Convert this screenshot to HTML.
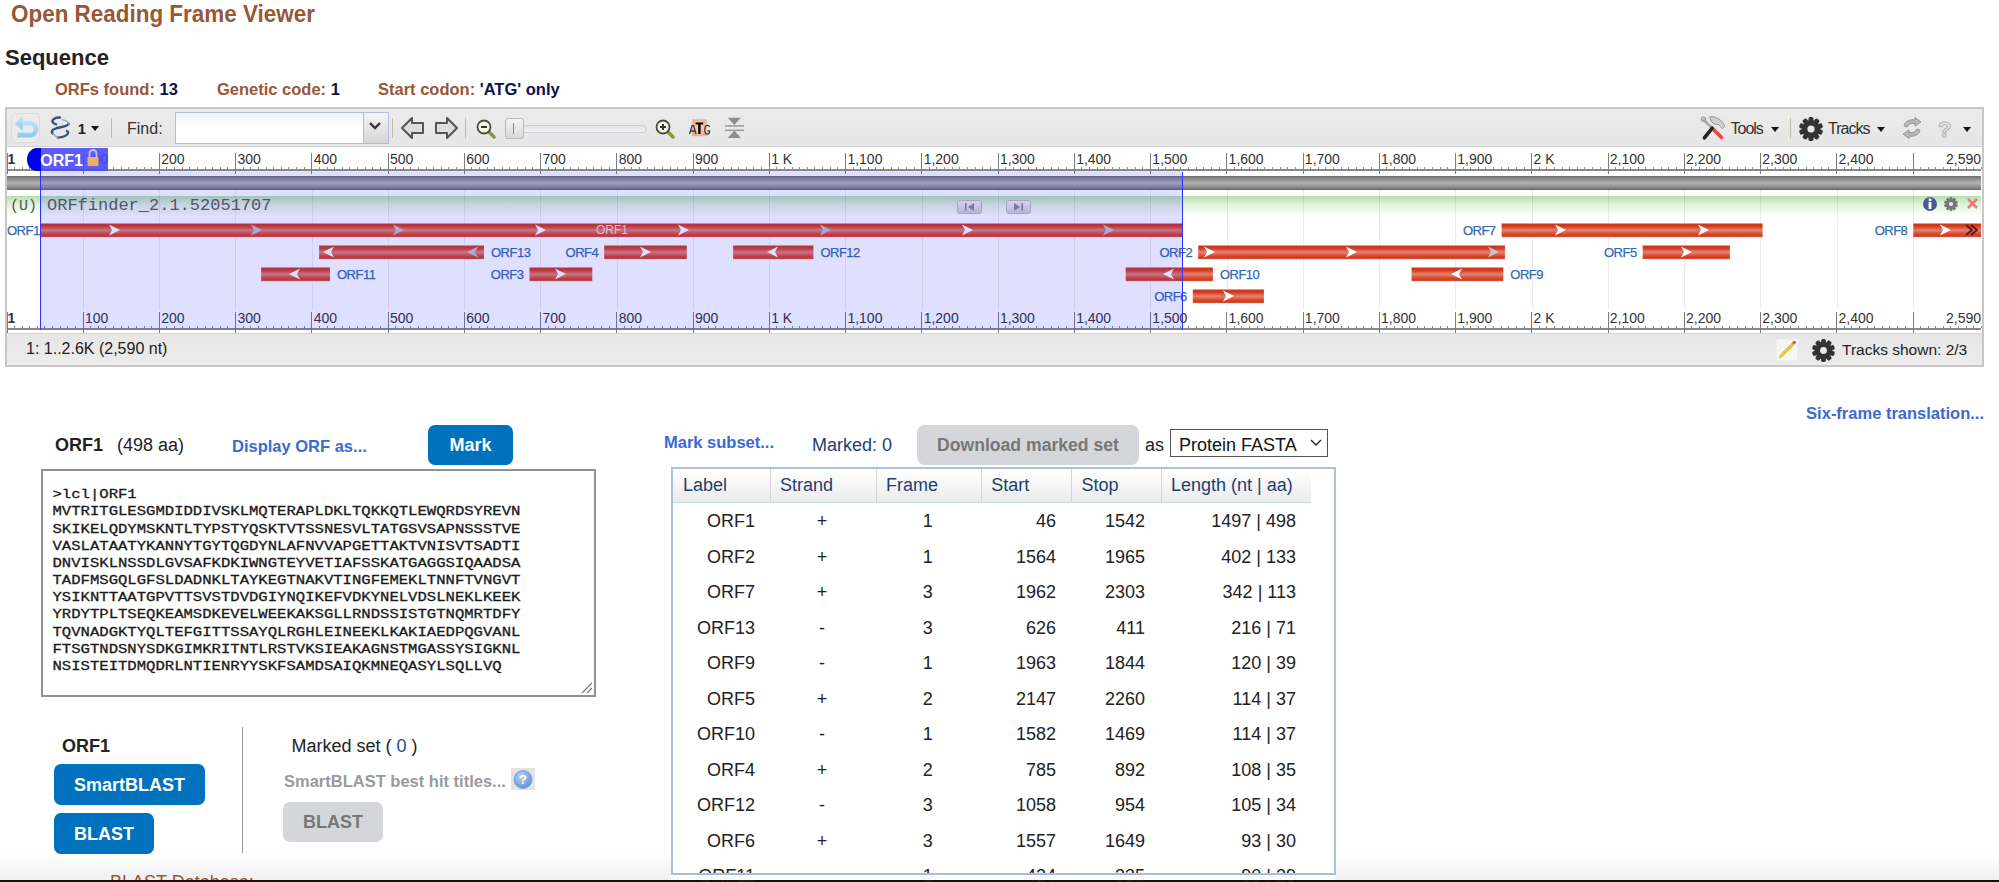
<!DOCTYPE html>
<html><head><meta charset="utf-8"><style>
html,body{margin:0;padding:0;background:#fff;width:1999px;height:882px;overflow:hidden;position:relative;}
body{font-family:"Liberation Sans", sans-serif;}
</style></head><body>
<div style="position:absolute;left:11px;top:1.88px;font:bold 24px/24px 'Liberation Sans', sans-serif;color:#985735;white-space:pre;transform:scaleX(0.935);transform-origin:0 0">Open Reading Frame Viewer</div>
<div style="position:absolute;left:5px;top:46.58px;font:bold 22px/22px 'Liberation Sans', sans-serif;color:#222;white-space:pre;">Sequence</div>
<div style="position:absolute;left:55px;top:80.73px;font:bold 16.5px/16.5px 'Liberation Sans', sans-serif;color:#985735;white-space:pre;">ORFs found: <span style="color:#0c1250">13</span></div>
<div style="position:absolute;left:217px;top:80.73px;font:bold 16.5px/16.5px 'Liberation Sans', sans-serif;color:#985735;white-space:pre;">Genetic code: <span style="color:#0c1250">1</span></div>
<div style="position:absolute;left:378px;top:80.73px;font:bold 16.5px/16.5px 'Liberation Sans', sans-serif;color:#985735;white-space:pre;">Start codon: <span style="color:#0c1250">'ATG' only</span></div>
<div style="position:absolute;left:5px;top:107px;width:1975px;height:256px;border:2px solid #cbc6c6;background:#fff;"></div>
<div style="position:absolute;left:7px;top:109px;width:1975px;height:37px;background:linear-gradient(#ebebeb,#e6e6e6);border-bottom:1px solid #d3d3d3;"></div>
<div style="position:absolute;left:11px;top:113px;width:29px;height:29.5px;border:1px solid #dcdcdc;border-radius:5px;background:#ebebeb;box-sizing:border-box;"></div>
<svg style="position:absolute;left:8px;top:110px" width="100" height="35" viewBox="8 110 100 35">
<defs><linearGradient id="ug" x1="0" y1="0" x2="0" y2="1"><stop offset="0" stop-color="#c4e2f6"/><stop offset="1" stop-color="#86cbf2"/></linearGradient></defs>
<path d="M14.5 123.5 L22.8 116.3 L22.8 130.7 Z" fill="url(#ug)"/>
<path d="M22 120.8 L30 120.8 A8.4 8.4 0 0 1 30 137.6 L17.5 137.6 L17.5 132.8 L30 132.8 A3.6 3.6 0 0 0 30 125.6 L22 125.6 Z" fill="url(#ug)"/>
<g fill="none" stroke="#3a5378" stroke-linecap="round">
<path d="M60 117.5 C55.5 117.3 51.5 119.3 52.6 122 C53.2 123.4 54.8 124 56.2 124.3" stroke-width="2.3"/>
<path d="M68.6 123.8 C68.4 126.2 60.5 127.2 55.5 128.6 C51.5 129.8 51 132 52.8 133.4" stroke-width="2.5"/>
<path d="M57.8 137.6 C63 137.3 68.3 135.2 68.2 132.4 C68.1 131.6 67.6 131.2 66.8 131" stroke-width="2.3"/>
<path d="M62.5 119.6 C66 120.4 68.6 121.8 68.6 123.8" stroke-width="1.4" stroke="#8ea4c0"/>
<path d="M52.8 133.4 C54.2 135 55.8 136.4 57.8 137.6" stroke-width="1.4" stroke="#8ea4c0"/>
</g></svg>
<div style="position:absolute;left:78px;top:121.65px;font:bold 14px/14px 'Liberation Sans', sans-serif;color:#222;white-space:pre;transform:scaleX(1.05)">1</div>
<div style="position:absolute;left:91px;top:126px;width:0;height:0;border-left:4px solid transparent;border-right:4px solid transparent;border-top:5px solid #111;"></div>
<div style="position:absolute;left:111px;top:118px;width:1px;height:20px;background:#c2bba8;"></div>
<div style="position:absolute;left:127px;top:120.96px;font:normal 16px/16px 'Liberation Sans', sans-serif;color:#333;white-space:pre;">Find:</div>
<div style="position:absolute;left:175px;top:112px;width:187px;height:30px;border:1px solid #b5bcd6;border-right:none;background:linear-gradient(#eef2f2,#fff 40%);"></div>
<div style="position:absolute;left:363px;top:112px;width:24px;height:30px;border:1px solid #b5bcd6;background:linear-gradient(#f4f4f4,#d6d6d6);"></div>
<svg style="position:absolute;left:367px;top:120px" width="16" height="12" viewBox="0 0 16 12"><path d="M3 3 L8 8 L13 3" fill="none" stroke="#333" stroke-width="2.4"/></svg>
<div style="position:absolute;left:392px;top:118px;width:1px;height:20px;background:#c2bba8;"></div>
<svg style="position:absolute;left:400px;top:116px" width="26" height="24" viewBox="0 0 26 24"><path d="M2 12 L12 2 L12 7 L23 7 L23 17 L12 17 L12 22 Z" fill="#dedede" stroke="#555" stroke-width="2" stroke-linejoin="round"/></svg>
<svg style="position:absolute;left:433px;top:116px" width="26" height="24" viewBox="0 0 26 24"><path d="M24 12 L14 2 L14 7 L3 7 L3 17 L14 17 L14 22 Z" fill="#dedede" stroke="#555" stroke-width="2" stroke-linejoin="round"/></svg>
<div style="position:absolute;left:465px;top:118px;width:1px;height:20px;background:#c2bba8;"></div>
<svg style="position:absolute;left:475px;top:118px" width="22" height="22" viewBox="0 0 22 22"><line x1="12" y1="12" x2="19" y2="19" stroke="#8a9a30" stroke-width="3.5" stroke-linecap="round"/><circle cx="9" cy="9" r="6.5" fill="#f4f4e8" stroke="#4c4c30" stroke-width="1.8"/><line x1="6" y1="9" x2="12" y2="9" stroke="#333" stroke-width="2"/></svg>
<div style="position:absolute;left:516px;top:125px;width:131px;height:8px;border:1px solid #c9cfd4;border-radius:4px;background:linear-gradient(#dfe3e6,#f2f4f4);box-sizing:border-box;"></div>
<div style="position:absolute;left:505px;top:118px;width:19px;height:21px;border:1px solid #b8b8b8;border-radius:3px;background:linear-gradient(#f6f6f6,#d9d9d9);box-sizing:border-box;"></div>
<div style="position:absolute;left:513px;top:123px;width:1px;height:11px;background:#888;"></div>
<svg style="position:absolute;left:654px;top:118px" width="22" height="22" viewBox="0 0 22 22"><line x1="12" y1="12" x2="19" y2="19" stroke="#8a9a30" stroke-width="3.5" stroke-linecap="round"/><circle cx="9" cy="9" r="6.5" fill="#f4f4e8" stroke="#4c4c30" stroke-width="1.8"/><line x1="6" y1="9" x2="12" y2="9" stroke="#333" stroke-width="2"/><line x1="9" y1="6" x2="9" y2="12" stroke="#333" stroke-width="2"/></svg>
<svg style="position:absolute;left:686px;top:117px" width="28" height="22" viewBox="686 117 28 22">
<defs><radialGradient id="atgg" cx="0.5" cy="0.45" r="0.6"><stop offset="0" stop-color="#f8dcc0"/><stop offset="1" stop-color="#eea890"/></radialGradient></defs>
<rect x="692.2" y="119.2" width="14.4" height="17" fill="url(#atgg)"/>
<path d="M689.6 134 L692 125.6 L693.6 125.6 L696 134 M690.6 131 L695 131" fill="none" stroke="#3a3a3a" stroke-width="1.3"/>
<path d="M695.6 122.4 L703.2 122.4 L703.2 124.6 L700.6 124.6 L700.6 134 L698.2 134 L698.2 124.6 L695.6 124.6 Z" fill="#000"/>
<path d="M709.6 127 C709 125.6 708.2 125.3 707.4 125.3 C705.6 125.3 704.8 127.3 704.8 129.7 C704.8 132.2 705.6 134.1 707.4 134.1 C709 134.1 709.6 132.8 709.6 131 L707.6 131" fill="none" stroke="#3a3a3a" stroke-width="1.3"/>
</svg>
<svg style="position:absolute;left:724px;top:117px" width="22" height="24" viewBox="0 0 22 24"><path d="M3.8 0.8 L16.8 0.8 L10.3 8 Z M3.8 21 L16.8 21 L10.3 13.6 Z" fill="#8c8c8c"/><rect x="1" y="8.2" width="19" height="1.5" fill="#9a9a9a"/><rect x="1" y="12.6" width="19" height="1.5" fill="#9a9a9a"/></svg>
<svg style="position:absolute;left:1695px;top:112px" width="40" height="33" viewBox="1695 112 40 33">
<path d="M1709.5 116.8 C1716 116 1722.5 120 1724.8 126.5 L1722.2 128.8 C1720.2 125.5 1717.5 123.5 1714.8 124.5 L1711 121 Z" fill="#d0d0d0" stroke="#8c8c8c" stroke-width="0.9"/>
<path d="M1703.8 120 L1711.5 127.5" stroke="#a8a8a8" stroke-width="2.6" stroke-linecap="round"/>
<circle cx="1703.6" cy="119.2" r="2.1" fill="none" stroke="#a0a0a0" stroke-width="1.3"/>
<path d="M1712.2 128.2 L1721.6 137.6" stroke="#e04a4a" stroke-width="3.6" stroke-linecap="round"/>
<path d="M1712.2 128.2 L1704.4 137.8" stroke="#252525" stroke-width="3.6" stroke-linecap="round"/>
</svg>
<div style="position:absolute;left:1730.5px;top:120.66px;font:normal 16px/16px 'Liberation Sans', sans-serif;color:#333;white-space:pre;letter-spacing:-1px">Tools</div>
<div style="position:absolute;left:1771px;top:127px;width:0;height:0;border-left:4px solid transparent;border-right:4px solid transparent;border-top:5px solid #111;"></div>
<div style="position:absolute;left:1790px;top:118px;width:1px;height:20px;background:#c2bba8;"></div>
<svg style="position:absolute;left:1799px;top:117px" width="24" height="24" viewBox="-11 -11 22 22"><rect x="-2.3" y="-11" width="4.6" height="4.5" rx="1.6" fill="#333" transform="rotate(0.0)"/><rect x="-2.3" y="-11" width="4.6" height="4.5" rx="1.6" fill="#333" transform="rotate(36.0)"/><rect x="-2.3" y="-11" width="4.6" height="4.5" rx="1.6" fill="#333" transform="rotate(72.0)"/><rect x="-2.3" y="-11" width="4.6" height="4.5" rx="1.6" fill="#333" transform="rotate(108.0)"/><rect x="-2.3" y="-11" width="4.6" height="4.5" rx="1.6" fill="#333" transform="rotate(144.0)"/><rect x="-2.3" y="-11" width="4.6" height="4.5" rx="1.6" fill="#333" transform="rotate(180.0)"/><rect x="-2.3" y="-11" width="4.6" height="4.5" rx="1.6" fill="#333" transform="rotate(216.0)"/><rect x="-2.3" y="-11" width="4.6" height="4.5" rx="1.6" fill="#333" transform="rotate(252.0)"/><rect x="-2.3" y="-11" width="4.6" height="4.5" rx="1.6" fill="#333" transform="rotate(288.0)"/><rect x="-2.3" y="-11" width="4.6" height="4.5" rx="1.6" fill="#333" transform="rotate(324.0)"/><circle r="8.3" fill="#333"/><circle r="3.3" fill="#e8e8e8"/></svg>
<div style="position:absolute;left:1828px;top:120.66px;font:normal 16px/16px 'Liberation Sans', sans-serif;color:#333;white-space:pre;letter-spacing:-1px">Tracks</div>
<div style="position:absolute;left:1877px;top:127px;width:0;height:0;border-left:4px solid transparent;border-right:4px solid transparent;border-top:5px solid #111;"></div>
<svg style="position:absolute;left:1901px;top:117px" width="22" height="22" viewBox="0 0 22 22"><path d="M3 9 C4 4 9 2 14 3 L14 0.5 L20 5 L14 9 L14 6.5 C10 6 7 7 6 10 Z" fill="#b8b8b8" stroke="#888" stroke-width="0.8"/><path d="M19 13 C18 18 13 20 8 19 L8 21.5 L2 17 L8 13 L8 15.5 C12 16 15 15 16 12 Z" fill="#b8b8b8" stroke="#888" stroke-width="0.8"/></svg>
<div style="position:absolute;left:1938px;top:118.88px;font:bold 22px/22px 'Liberation Sans', sans-serif;color:#ececec;white-space:pre;-webkit-text-stroke:1.1px #b4b4b4">?</div>
<div style="position:absolute;left:1963px;top:127px;width:0;height:0;border-left:4px solid transparent;border-right:4px solid transparent;border-top:5px solid #111;"></div>
<div style="position:absolute;left:7px;top:169.2px;width:1974px;height:1.4px;background:#8a8a8a;"></div>
<div style="position:absolute;left:13.9px;top:167.2px;width:1px;height:2px;background:#888"></div><div style="position:absolute;left:21.5px;top:167.2px;width:1px;height:2px;background:#888"></div><div style="position:absolute;left:29.1px;top:167.2px;width:1px;height:2px;background:#888"></div><div style="position:absolute;left:36.7px;top:167.2px;width:1px;height:2px;background:#888"></div><div style="position:absolute;left:44.4px;top:167.2px;width:1px;height:2px;background:#888"></div><div style="position:absolute;left:52.0px;top:167.2px;width:1px;height:2px;background:#888"></div><div style="position:absolute;left:59.6px;top:167.2px;width:1px;height:2px;background:#888"></div><div style="position:absolute;left:67.2px;top:167.2px;width:1px;height:2px;background:#888"></div><div style="position:absolute;left:74.9px;top:167.2px;width:1px;height:2px;background:#888"></div><div style="position:absolute;left:90.1px;top:167.2px;width:1px;height:2px;background:#888"></div><div style="position:absolute;left:97.7px;top:167.2px;width:1px;height:2px;background:#888"></div><div style="position:absolute;left:105.4px;top:167.2px;width:1px;height:2px;background:#888"></div><div style="position:absolute;left:113.0px;top:167.2px;width:1px;height:2px;background:#888"></div><div style="position:absolute;left:120.6px;top:167.2px;width:1px;height:2px;background:#888"></div><div style="position:absolute;left:128.2px;top:167.2px;width:1px;height:2px;background:#888"></div><div style="position:absolute;left:135.8px;top:167.2px;width:1px;height:2px;background:#888"></div><div style="position:absolute;left:143.5px;top:167.2px;width:1px;height:2px;background:#888"></div><div style="position:absolute;left:151.1px;top:167.2px;width:1px;height:2px;background:#888"></div><div style="position:absolute;left:166.3px;top:167.2px;width:1px;height:2px;background:#888"></div><div style="position:absolute;left:174.0px;top:167.2px;width:1px;height:2px;background:#888"></div><div style="position:absolute;left:181.6px;top:167.2px;width:1px;height:2px;background:#888"></div><div style="position:absolute;left:189.2px;top:167.2px;width:1px;height:2px;background:#888"></div><div style="position:absolute;left:196.8px;top:167.2px;width:1px;height:2px;background:#888"></div><div style="position:absolute;left:204.5px;top:167.2px;width:1px;height:2px;background:#888"></div><div style="position:absolute;left:212.1px;top:167.2px;width:1px;height:2px;background:#888"></div><div style="position:absolute;left:219.7px;top:167.2px;width:1px;height:2px;background:#888"></div><div style="position:absolute;left:227.3px;top:167.2px;width:1px;height:2px;background:#888"></div><div style="position:absolute;left:242.6px;top:167.2px;width:1px;height:2px;background:#888"></div><div style="position:absolute;left:250.2px;top:167.2px;width:1px;height:2px;background:#888"></div><div style="position:absolute;left:257.8px;top:167.2px;width:1px;height:2px;background:#888"></div><div style="position:absolute;left:265.5px;top:167.2px;width:1px;height:2px;background:#888"></div><div style="position:absolute;left:273.1px;top:167.2px;width:1px;height:2px;background:#888"></div><div style="position:absolute;left:280.7px;top:167.2px;width:1px;height:2px;background:#888"></div><div style="position:absolute;left:288.3px;top:167.2px;width:1px;height:2px;background:#888"></div><div style="position:absolute;left:296.0px;top:167.2px;width:1px;height:2px;background:#888"></div><div style="position:absolute;left:303.6px;top:167.2px;width:1px;height:2px;background:#888"></div><div style="position:absolute;left:318.8px;top:167.2px;width:1px;height:2px;background:#888"></div><div style="position:absolute;left:326.5px;top:167.2px;width:1px;height:2px;background:#888"></div><div style="position:absolute;left:334.1px;top:167.2px;width:1px;height:2px;background:#888"></div><div style="position:absolute;left:341.7px;top:167.2px;width:1px;height:2px;background:#888"></div><div style="position:absolute;left:349.3px;top:167.2px;width:1px;height:2px;background:#888"></div><div style="position:absolute;left:357.0px;top:167.2px;width:1px;height:2px;background:#888"></div><div style="position:absolute;left:364.6px;top:167.2px;width:1px;height:2px;background:#888"></div><div style="position:absolute;left:372.2px;top:167.2px;width:1px;height:2px;background:#888"></div><div style="position:absolute;left:379.8px;top:167.2px;width:1px;height:2px;background:#888"></div><div style="position:absolute;left:395.1px;top:167.2px;width:1px;height:2px;background:#888"></div><div style="position:absolute;left:402.7px;top:167.2px;width:1px;height:2px;background:#888"></div><div style="position:absolute;left:410.3px;top:167.2px;width:1px;height:2px;background:#888"></div><div style="position:absolute;left:417.9px;top:167.2px;width:1px;height:2px;background:#888"></div><div style="position:absolute;left:425.6px;top:167.2px;width:1px;height:2px;background:#888"></div><div style="position:absolute;left:433.2px;top:167.2px;width:1px;height:2px;background:#888"></div><div style="position:absolute;left:440.8px;top:167.2px;width:1px;height:2px;background:#888"></div><div style="position:absolute;left:448.4px;top:167.2px;width:1px;height:2px;background:#888"></div><div style="position:absolute;left:456.1px;top:167.2px;width:1px;height:2px;background:#888"></div><div style="position:absolute;left:471.3px;top:167.2px;width:1px;height:2px;background:#888"></div><div style="position:absolute;left:478.9px;top:167.2px;width:1px;height:2px;background:#888"></div><div style="position:absolute;left:486.6px;top:167.2px;width:1px;height:2px;background:#888"></div><div style="position:absolute;left:494.2px;top:167.2px;width:1px;height:2px;background:#888"></div><div style="position:absolute;left:501.8px;top:167.2px;width:1px;height:2px;background:#888"></div><div style="position:absolute;left:509.4px;top:167.2px;width:1px;height:2px;background:#888"></div><div style="position:absolute;left:517.1px;top:167.2px;width:1px;height:2px;background:#888"></div><div style="position:absolute;left:524.7px;top:167.2px;width:1px;height:2px;background:#888"></div><div style="position:absolute;left:532.3px;top:167.2px;width:1px;height:2px;background:#888"></div><div style="position:absolute;left:547.6px;top:167.2px;width:1px;height:2px;background:#888"></div><div style="position:absolute;left:555.2px;top:167.2px;width:1px;height:2px;background:#888"></div><div style="position:absolute;left:562.8px;top:167.2px;width:1px;height:2px;background:#888"></div><div style="position:absolute;left:570.4px;top:167.2px;width:1px;height:2px;background:#888"></div><div style="position:absolute;left:578.1px;top:167.2px;width:1px;height:2px;background:#888"></div><div style="position:absolute;left:585.7px;top:167.2px;width:1px;height:2px;background:#888"></div><div style="position:absolute;left:593.3px;top:167.2px;width:1px;height:2px;background:#888"></div><div style="position:absolute;left:600.9px;top:167.2px;width:1px;height:2px;background:#888"></div><div style="position:absolute;left:608.5px;top:167.2px;width:1px;height:2px;background:#888"></div><div style="position:absolute;left:623.8px;top:167.2px;width:1px;height:2px;background:#888"></div><div style="position:absolute;left:631.4px;top:167.2px;width:1px;height:2px;background:#888"></div><div style="position:absolute;left:639.0px;top:167.2px;width:1px;height:2px;background:#888"></div><div style="position:absolute;left:646.7px;top:167.2px;width:1px;height:2px;background:#888"></div><div style="position:absolute;left:654.3px;top:167.2px;width:1px;height:2px;background:#888"></div><div style="position:absolute;left:661.9px;top:167.2px;width:1px;height:2px;background:#888"></div><div style="position:absolute;left:669.5px;top:167.2px;width:1px;height:2px;background:#888"></div><div style="position:absolute;left:677.2px;top:167.2px;width:1px;height:2px;background:#888"></div><div style="position:absolute;left:684.8px;top:167.2px;width:1px;height:2px;background:#888"></div><div style="position:absolute;left:700.0px;top:167.2px;width:1px;height:2px;background:#888"></div><div style="position:absolute;left:707.7px;top:167.2px;width:1px;height:2px;background:#888"></div><div style="position:absolute;left:715.3px;top:167.2px;width:1px;height:2px;background:#888"></div><div style="position:absolute;left:722.9px;top:167.2px;width:1px;height:2px;background:#888"></div><div style="position:absolute;left:730.5px;top:167.2px;width:1px;height:2px;background:#888"></div><div style="position:absolute;left:738.2px;top:167.2px;width:1px;height:2px;background:#888"></div><div style="position:absolute;left:745.8px;top:167.2px;width:1px;height:2px;background:#888"></div><div style="position:absolute;left:753.4px;top:167.2px;width:1px;height:2px;background:#888"></div><div style="position:absolute;left:761.0px;top:167.2px;width:1px;height:2px;background:#888"></div><div style="position:absolute;left:776.3px;top:167.2px;width:1px;height:2px;background:#888"></div><div style="position:absolute;left:783.9px;top:167.2px;width:1px;height:2px;background:#888"></div><div style="position:absolute;left:791.5px;top:167.2px;width:1px;height:2px;background:#888"></div><div style="position:absolute;left:799.2px;top:167.2px;width:1px;height:2px;background:#888"></div><div style="position:absolute;left:806.8px;top:167.2px;width:1px;height:2px;background:#888"></div><div style="position:absolute;left:814.4px;top:167.2px;width:1px;height:2px;background:#888"></div><div style="position:absolute;left:822.0px;top:167.2px;width:1px;height:2px;background:#888"></div><div style="position:absolute;left:829.7px;top:167.2px;width:1px;height:2px;background:#888"></div><div style="position:absolute;left:837.3px;top:167.2px;width:1px;height:2px;background:#888"></div><div style="position:absolute;left:852.5px;top:167.2px;width:1px;height:2px;background:#888"></div><div style="position:absolute;left:860.1px;top:167.2px;width:1px;height:2px;background:#888"></div><div style="position:absolute;left:867.8px;top:167.2px;width:1px;height:2px;background:#888"></div><div style="position:absolute;left:875.4px;top:167.2px;width:1px;height:2px;background:#888"></div><div style="position:absolute;left:883.0px;top:167.2px;width:1px;height:2px;background:#888"></div><div style="position:absolute;left:890.6px;top:167.2px;width:1px;height:2px;background:#888"></div><div style="position:absolute;left:898.3px;top:167.2px;width:1px;height:2px;background:#888"></div><div style="position:absolute;left:905.9px;top:167.2px;width:1px;height:2px;background:#888"></div><div style="position:absolute;left:913.5px;top:167.2px;width:1px;height:2px;background:#888"></div><div style="position:absolute;left:928.8px;top:167.2px;width:1px;height:2px;background:#888"></div><div style="position:absolute;left:936.4px;top:167.2px;width:1px;height:2px;background:#888"></div><div style="position:absolute;left:944.0px;top:167.2px;width:1px;height:2px;background:#888"></div><div style="position:absolute;left:951.6px;top:167.2px;width:1px;height:2px;background:#888"></div><div style="position:absolute;left:959.3px;top:167.2px;width:1px;height:2px;background:#888"></div><div style="position:absolute;left:966.9px;top:167.2px;width:1px;height:2px;background:#888"></div><div style="position:absolute;left:974.5px;top:167.2px;width:1px;height:2px;background:#888"></div><div style="position:absolute;left:982.1px;top:167.2px;width:1px;height:2px;background:#888"></div><div style="position:absolute;left:989.8px;top:167.2px;width:1px;height:2px;background:#888"></div><div style="position:absolute;left:1005.0px;top:167.2px;width:1px;height:2px;background:#888"></div><div style="position:absolute;left:1012.6px;top:167.2px;width:1px;height:2px;background:#888"></div><div style="position:absolute;left:1020.3px;top:167.2px;width:1px;height:2px;background:#888"></div><div style="position:absolute;left:1027.9px;top:167.2px;width:1px;height:2px;background:#888"></div><div style="position:absolute;left:1035.5px;top:167.2px;width:1px;height:2px;background:#888"></div><div style="position:absolute;left:1043.1px;top:167.2px;width:1px;height:2px;background:#888"></div><div style="position:absolute;left:1050.8px;top:167.2px;width:1px;height:2px;background:#888"></div><div style="position:absolute;left:1058.4px;top:167.2px;width:1px;height:2px;background:#888"></div><div style="position:absolute;left:1066.0px;top:167.2px;width:1px;height:2px;background:#888"></div><div style="position:absolute;left:1081.2px;top:167.2px;width:1px;height:2px;background:#888"></div><div style="position:absolute;left:1088.9px;top:167.2px;width:1px;height:2px;background:#888"></div><div style="position:absolute;left:1096.5px;top:167.2px;width:1px;height:2px;background:#888"></div><div style="position:absolute;left:1104.1px;top:167.2px;width:1px;height:2px;background:#888"></div><div style="position:absolute;left:1111.7px;top:167.2px;width:1px;height:2px;background:#888"></div><div style="position:absolute;left:1119.4px;top:167.2px;width:1px;height:2px;background:#888"></div><div style="position:absolute;left:1127.0px;top:167.2px;width:1px;height:2px;background:#888"></div><div style="position:absolute;left:1134.6px;top:167.2px;width:1px;height:2px;background:#888"></div><div style="position:absolute;left:1142.2px;top:167.2px;width:1px;height:2px;background:#888"></div><div style="position:absolute;left:1157.5px;top:167.2px;width:1px;height:2px;background:#888"></div><div style="position:absolute;left:1165.1px;top:167.2px;width:1px;height:2px;background:#888"></div><div style="position:absolute;left:1172.7px;top:167.2px;width:1px;height:2px;background:#888"></div><div style="position:absolute;left:1180.4px;top:167.2px;width:1px;height:2px;background:#888"></div><div style="position:absolute;left:1188.0px;top:167.2px;width:1px;height:2px;background:#888"></div><div style="position:absolute;left:1195.6px;top:167.2px;width:1px;height:2px;background:#888"></div><div style="position:absolute;left:1203.2px;top:167.2px;width:1px;height:2px;background:#888"></div><div style="position:absolute;left:1210.9px;top:167.2px;width:1px;height:2px;background:#888"></div><div style="position:absolute;left:1218.5px;top:167.2px;width:1px;height:2px;background:#888"></div><div style="position:absolute;left:1233.7px;top:167.2px;width:1px;height:2px;background:#888"></div><div style="position:absolute;left:1241.4px;top:167.2px;width:1px;height:2px;background:#888"></div><div style="position:absolute;left:1249.0px;top:167.2px;width:1px;height:2px;background:#888"></div><div style="position:absolute;left:1256.6px;top:167.2px;width:1px;height:2px;background:#888"></div><div style="position:absolute;left:1264.2px;top:167.2px;width:1px;height:2px;background:#888"></div><div style="position:absolute;left:1271.9px;top:167.2px;width:1px;height:2px;background:#888"></div><div style="position:absolute;left:1279.5px;top:167.2px;width:1px;height:2px;background:#888"></div><div style="position:absolute;left:1287.1px;top:167.2px;width:1px;height:2px;background:#888"></div><div style="position:absolute;left:1294.7px;top:167.2px;width:1px;height:2px;background:#888"></div><div style="position:absolute;left:1310.0px;top:167.2px;width:1px;height:2px;background:#888"></div><div style="position:absolute;left:1317.6px;top:167.2px;width:1px;height:2px;background:#888"></div><div style="position:absolute;left:1325.2px;top:167.2px;width:1px;height:2px;background:#888"></div><div style="position:absolute;left:1332.8px;top:167.2px;width:1px;height:2px;background:#888"></div><div style="position:absolute;left:1340.5px;top:167.2px;width:1px;height:2px;background:#888"></div><div style="position:absolute;left:1348.1px;top:167.2px;width:1px;height:2px;background:#888"></div><div style="position:absolute;left:1355.7px;top:167.2px;width:1px;height:2px;background:#888"></div><div style="position:absolute;left:1363.3px;top:167.2px;width:1px;height:2px;background:#888"></div><div style="position:absolute;left:1371.0px;top:167.2px;width:1px;height:2px;background:#888"></div><div style="position:absolute;left:1386.2px;top:167.2px;width:1px;height:2px;background:#888"></div><div style="position:absolute;left:1393.8px;top:167.2px;width:1px;height:2px;background:#888"></div><div style="position:absolute;left:1401.5px;top:167.2px;width:1px;height:2px;background:#888"></div><div style="position:absolute;left:1409.1px;top:167.2px;width:1px;height:2px;background:#888"></div><div style="position:absolute;left:1416.7px;top:167.2px;width:1px;height:2px;background:#888"></div><div style="position:absolute;left:1424.3px;top:167.2px;width:1px;height:2px;background:#888"></div><div style="position:absolute;left:1432.0px;top:167.2px;width:1px;height:2px;background:#888"></div><div style="position:absolute;left:1439.6px;top:167.2px;width:1px;height:2px;background:#888"></div><div style="position:absolute;left:1447.2px;top:167.2px;width:1px;height:2px;background:#888"></div><div style="position:absolute;left:1462.5px;top:167.2px;width:1px;height:2px;background:#888"></div><div style="position:absolute;left:1470.1px;top:167.2px;width:1px;height:2px;background:#888"></div><div style="position:absolute;left:1477.7px;top:167.2px;width:1px;height:2px;background:#888"></div><div style="position:absolute;left:1485.3px;top:167.2px;width:1px;height:2px;background:#888"></div><div style="position:absolute;left:1493.0px;top:167.2px;width:1px;height:2px;background:#888"></div><div style="position:absolute;left:1500.6px;top:167.2px;width:1px;height:2px;background:#888"></div><div style="position:absolute;left:1508.2px;top:167.2px;width:1px;height:2px;background:#888"></div><div style="position:absolute;left:1515.8px;top:167.2px;width:1px;height:2px;background:#888"></div><div style="position:absolute;left:1523.5px;top:167.2px;width:1px;height:2px;background:#888"></div><div style="position:absolute;left:1538.7px;top:167.2px;width:1px;height:2px;background:#888"></div><div style="position:absolute;left:1546.3px;top:167.2px;width:1px;height:2px;background:#888"></div><div style="position:absolute;left:1554.0px;top:167.2px;width:1px;height:2px;background:#888"></div><div style="position:absolute;left:1561.6px;top:167.2px;width:1px;height:2px;background:#888"></div><div style="position:absolute;left:1569.2px;top:167.2px;width:1px;height:2px;background:#888"></div><div style="position:absolute;left:1576.8px;top:167.2px;width:1px;height:2px;background:#888"></div><div style="position:absolute;left:1584.4px;top:167.2px;width:1px;height:2px;background:#888"></div><div style="position:absolute;left:1592.1px;top:167.2px;width:1px;height:2px;background:#888"></div><div style="position:absolute;left:1599.7px;top:167.2px;width:1px;height:2px;background:#888"></div><div style="position:absolute;left:1614.9px;top:167.2px;width:1px;height:2px;background:#888"></div><div style="position:absolute;left:1622.6px;top:167.2px;width:1px;height:2px;background:#888"></div><div style="position:absolute;left:1630.2px;top:167.2px;width:1px;height:2px;background:#888"></div><div style="position:absolute;left:1637.8px;top:167.2px;width:1px;height:2px;background:#888"></div><div style="position:absolute;left:1645.4px;top:167.2px;width:1px;height:2px;background:#888"></div><div style="position:absolute;left:1653.1px;top:167.2px;width:1px;height:2px;background:#888"></div><div style="position:absolute;left:1660.7px;top:167.2px;width:1px;height:2px;background:#888"></div><div style="position:absolute;left:1668.3px;top:167.2px;width:1px;height:2px;background:#888"></div><div style="position:absolute;left:1675.9px;top:167.2px;width:1px;height:2px;background:#888"></div><div style="position:absolute;left:1691.2px;top:167.2px;width:1px;height:2px;background:#888"></div><div style="position:absolute;left:1698.8px;top:167.2px;width:1px;height:2px;background:#888"></div><div style="position:absolute;left:1706.4px;top:167.2px;width:1px;height:2px;background:#888"></div><div style="position:absolute;left:1714.1px;top:167.2px;width:1px;height:2px;background:#888"></div><div style="position:absolute;left:1721.7px;top:167.2px;width:1px;height:2px;background:#888"></div><div style="position:absolute;left:1729.3px;top:167.2px;width:1px;height:2px;background:#888"></div><div style="position:absolute;left:1736.9px;top:167.2px;width:1px;height:2px;background:#888"></div><div style="position:absolute;left:1744.6px;top:167.2px;width:1px;height:2px;background:#888"></div><div style="position:absolute;left:1752.2px;top:167.2px;width:1px;height:2px;background:#888"></div><div style="position:absolute;left:1767.4px;top:167.2px;width:1px;height:2px;background:#888"></div><div style="position:absolute;left:1775.1px;top:167.2px;width:1px;height:2px;background:#888"></div><div style="position:absolute;left:1782.7px;top:167.2px;width:1px;height:2px;background:#888"></div><div style="position:absolute;left:1790.3px;top:167.2px;width:1px;height:2px;background:#888"></div><div style="position:absolute;left:1797.9px;top:167.2px;width:1px;height:2px;background:#888"></div><div style="position:absolute;left:1805.5px;top:167.2px;width:1px;height:2px;background:#888"></div><div style="position:absolute;left:1813.2px;top:167.2px;width:1px;height:2px;background:#888"></div><div style="position:absolute;left:1820.8px;top:167.2px;width:1px;height:2px;background:#888"></div><div style="position:absolute;left:1828.4px;top:167.2px;width:1px;height:2px;background:#888"></div><div style="position:absolute;left:1843.7px;top:167.2px;width:1px;height:2px;background:#888"></div><div style="position:absolute;left:1851.3px;top:167.2px;width:1px;height:2px;background:#888"></div><div style="position:absolute;left:1858.9px;top:167.2px;width:1px;height:2px;background:#888"></div><div style="position:absolute;left:1866.5px;top:167.2px;width:1px;height:2px;background:#888"></div><div style="position:absolute;left:1874.2px;top:167.2px;width:1px;height:2px;background:#888"></div><div style="position:absolute;left:1881.8px;top:167.2px;width:1px;height:2px;background:#888"></div><div style="position:absolute;left:1889.4px;top:167.2px;width:1px;height:2px;background:#888"></div><div style="position:absolute;left:1897.0px;top:167.2px;width:1px;height:2px;background:#888"></div><div style="position:absolute;left:1904.7px;top:167.2px;width:1px;height:2px;background:#888"></div><div style="position:absolute;left:1919.9px;top:167.2px;width:1px;height:2px;background:#888"></div><div style="position:absolute;left:1927.5px;top:167.2px;width:1px;height:2px;background:#888"></div><div style="position:absolute;left:1935.2px;top:167.2px;width:1px;height:2px;background:#888"></div><div style="position:absolute;left:1942.8px;top:167.2px;width:1px;height:2px;background:#888"></div><div style="position:absolute;left:1950.4px;top:167.2px;width:1px;height:2px;background:#888"></div><div style="position:absolute;left:1958.0px;top:167.2px;width:1px;height:2px;background:#888"></div><div style="position:absolute;left:1965.7px;top:167.2px;width:1px;height:2px;background:#888"></div><div style="position:absolute;left:1973.3px;top:167.2px;width:1px;height:2px;background:#888"></div><div style="position:absolute;left:1980.9px;top:167.2px;width:1px;height:2px;background:#888"></div>
<div style="position:absolute;left:7px;top:152.5px;width:1.4px;height:21px;background:#7c7c7c;"></div>
<div style="position:absolute;left:7.5px;top:151.65px;font:bold 14px/14px 'Liberation Sans', sans-serif;color:#333;white-space:pre;">1</div>
<div style="position:absolute;left:82.5px;top:152.5px;width:1.4px;height:21px;background:#7c7c7c;"></div>
<div style="position:absolute;left:84.97958px;top:151.65px;font:normal 14px/14px 'Liberation Sans', sans-serif;color:#333;white-space:pre;">100</div>
<div style="position:absolute;left:158.5px;top:152.5px;width:1.4px;height:21px;background:#7c7c7c;"></div>
<div style="position:absolute;left:161.22158px;top:151.65px;font:normal 14px/14px 'Liberation Sans', sans-serif;color:#333;white-space:pre;">200</div>
<div style="position:absolute;left:235.0px;top:152.5px;width:1.4px;height:21px;background:#7c7c7c;"></div>
<div style="position:absolute;left:237.46358px;top:151.65px;font:normal 14px/14px 'Liberation Sans', sans-serif;color:#333;white-space:pre;">300</div>
<div style="position:absolute;left:311.0px;top:152.5px;width:1.4px;height:21px;background:#7c7c7c;"></div>
<div style="position:absolute;left:313.70558px;top:151.65px;font:normal 14px/14px 'Liberation Sans', sans-serif;color:#333;white-space:pre;">400</div>
<div style="position:absolute;left:387.5px;top:152.5px;width:1.4px;height:21px;background:#7c7c7c;"></div>
<div style="position:absolute;left:389.94758px;top:151.65px;font:normal 14px/14px 'Liberation Sans', sans-serif;color:#333;white-space:pre;">500</div>
<div style="position:absolute;left:463.5px;top:152.5px;width:1.4px;height:21px;background:#7c7c7c;"></div>
<div style="position:absolute;left:466.18958px;top:151.65px;font:normal 14px/14px 'Liberation Sans', sans-serif;color:#333;white-space:pre;">600</div>
<div style="position:absolute;left:540.0px;top:152.5px;width:1.4px;height:21px;background:#7c7c7c;"></div>
<div style="position:absolute;left:542.4315799999999px;top:151.65px;font:normal 14px/14px 'Liberation Sans', sans-serif;color:#333;white-space:pre;">700</div>
<div style="position:absolute;left:616.0px;top:152.5px;width:1.4px;height:21px;background:#7c7c7c;"></div>
<div style="position:absolute;left:618.67358px;top:151.65px;font:normal 14px/14px 'Liberation Sans', sans-serif;color:#333;white-space:pre;">800</div>
<div style="position:absolute;left:692.5px;top:152.5px;width:1.4px;height:21px;background:#7c7c7c;"></div>
<div style="position:absolute;left:694.91558px;top:151.65px;font:normal 14px/14px 'Liberation Sans', sans-serif;color:#333;white-space:pre;">900</div>
<div style="position:absolute;left:768.5px;top:152.5px;width:1.4px;height:21px;background:#7c7c7c;"></div>
<div style="position:absolute;left:771.1575799999999px;top:151.65px;font:normal 14px/14px 'Liberation Sans', sans-serif;color:#333;white-space:pre;">1 K</div>
<div style="position:absolute;left:845.0px;top:152.5px;width:1.4px;height:21px;background:#7c7c7c;"></div>
<div style="position:absolute;left:847.39958px;top:151.65px;font:normal 14px/14px 'Liberation Sans', sans-serif;color:#333;white-space:pre;">1,100</div>
<div style="position:absolute;left:921.0px;top:152.5px;width:1.4px;height:21px;background:#7c7c7c;"></div>
<div style="position:absolute;left:923.64158px;top:151.65px;font:normal 14px/14px 'Liberation Sans', sans-serif;color:#333;white-space:pre;">1,200</div>
<div style="position:absolute;left:997.5px;top:152.5px;width:1.4px;height:21px;background:#7c7c7c;"></div>
<div style="position:absolute;left:999.8835799999999px;top:151.65px;font:normal 14px/14px 'Liberation Sans', sans-serif;color:#333;white-space:pre;">1,300</div>
<div style="position:absolute;left:1073.5px;top:152.5px;width:1.4px;height:21px;background:#7c7c7c;"></div>
<div style="position:absolute;left:1076.12558px;top:151.65px;font:normal 14px/14px 'Liberation Sans', sans-serif;color:#333;white-space:pre;">1,400</div>
<div style="position:absolute;left:1150.0px;top:152.5px;width:1.4px;height:21px;background:#7c7c7c;"></div>
<div style="position:absolute;left:1152.36758px;top:151.65px;font:normal 14px/14px 'Liberation Sans', sans-serif;color:#333;white-space:pre;">1,500</div>
<div style="position:absolute;left:1226.0px;top:152.5px;width:1.4px;height:21px;background:#7c7c7c;"></div>
<div style="position:absolute;left:1228.60958px;top:151.65px;font:normal 14px/14px 'Liberation Sans', sans-serif;color:#333;white-space:pre;">1,600</div>
<div style="position:absolute;left:1302.5px;top:152.5px;width:1.4px;height:21px;background:#7c7c7c;"></div>
<div style="position:absolute;left:1304.85158px;top:151.65px;font:normal 14px/14px 'Liberation Sans', sans-serif;color:#333;white-space:pre;">1,700</div>
<div style="position:absolute;left:1378.5px;top:152.5px;width:1.4px;height:21px;background:#7c7c7c;"></div>
<div style="position:absolute;left:1381.09358px;top:151.65px;font:normal 14px/14px 'Liberation Sans', sans-serif;color:#333;white-space:pre;">1,800</div>
<div style="position:absolute;left:1455.0px;top:152.5px;width:1.4px;height:21px;background:#7c7c7c;"></div>
<div style="position:absolute;left:1457.33558px;top:151.65px;font:normal 14px/14px 'Liberation Sans', sans-serif;color:#333;white-space:pre;">1,900</div>
<div style="position:absolute;left:1531.0px;top:152.5px;width:1.4px;height:21px;background:#7c7c7c;"></div>
<div style="position:absolute;left:1533.57758px;top:151.65px;font:normal 14px/14px 'Liberation Sans', sans-serif;color:#333;white-space:pre;">2 K</div>
<div style="position:absolute;left:1607.5px;top:152.5px;width:1.4px;height:21px;background:#7c7c7c;"></div>
<div style="position:absolute;left:1609.8195799999999px;top:151.65px;font:normal 14px/14px 'Liberation Sans', sans-serif;color:#333;white-space:pre;">2,100</div>
<div style="position:absolute;left:1683.5px;top:152.5px;width:1.4px;height:21px;background:#7c7c7c;"></div>
<div style="position:absolute;left:1686.06158px;top:151.65px;font:normal 14px/14px 'Liberation Sans', sans-serif;color:#333;white-space:pre;">2,200</div>
<div style="position:absolute;left:1760.0px;top:152.5px;width:1.4px;height:21px;background:#7c7c7c;"></div>
<div style="position:absolute;left:1762.30358px;top:151.65px;font:normal 14px/14px 'Liberation Sans', sans-serif;color:#333;white-space:pre;">2,300</div>
<div style="position:absolute;left:1836.0px;top:152.5px;width:1.4px;height:21px;background:#7c7c7c;"></div>
<div style="position:absolute;left:1838.54558px;top:151.65px;font:normal 14px/14px 'Liberation Sans', sans-serif;color:#333;white-space:pre;">2,400</div>
<div style="position:absolute;left:1912.5px;top:152.5px;width:1.4px;height:21px;background:#7c7c7c;"></div>
<div style="position:absolute;left:1381px;width:600px;text-align:right;top:151.65px;font:normal 14px/14px 'Liberation Sans', sans-serif;color:#333;white-space:pre;">2,590</div>
<div style="position:absolute;left:7px;top:328.2px;width:1974px;height:1.4px;background:#8a8a8a;"></div>
<div style="position:absolute;left:13.9px;top:326.2px;width:1px;height:2px;background:#888"></div><div style="position:absolute;left:21.5px;top:326.2px;width:1px;height:2px;background:#888"></div><div style="position:absolute;left:29.1px;top:326.2px;width:1px;height:2px;background:#888"></div><div style="position:absolute;left:36.7px;top:326.2px;width:1px;height:2px;background:#888"></div><div style="position:absolute;left:44.4px;top:326.2px;width:1px;height:2px;background:#888"></div><div style="position:absolute;left:52.0px;top:326.2px;width:1px;height:2px;background:#888"></div><div style="position:absolute;left:59.6px;top:326.2px;width:1px;height:2px;background:#888"></div><div style="position:absolute;left:67.2px;top:326.2px;width:1px;height:2px;background:#888"></div><div style="position:absolute;left:74.9px;top:326.2px;width:1px;height:2px;background:#888"></div><div style="position:absolute;left:90.1px;top:326.2px;width:1px;height:2px;background:#888"></div><div style="position:absolute;left:97.7px;top:326.2px;width:1px;height:2px;background:#888"></div><div style="position:absolute;left:105.4px;top:326.2px;width:1px;height:2px;background:#888"></div><div style="position:absolute;left:113.0px;top:326.2px;width:1px;height:2px;background:#888"></div><div style="position:absolute;left:120.6px;top:326.2px;width:1px;height:2px;background:#888"></div><div style="position:absolute;left:128.2px;top:326.2px;width:1px;height:2px;background:#888"></div><div style="position:absolute;left:135.8px;top:326.2px;width:1px;height:2px;background:#888"></div><div style="position:absolute;left:143.5px;top:326.2px;width:1px;height:2px;background:#888"></div><div style="position:absolute;left:151.1px;top:326.2px;width:1px;height:2px;background:#888"></div><div style="position:absolute;left:166.3px;top:326.2px;width:1px;height:2px;background:#888"></div><div style="position:absolute;left:174.0px;top:326.2px;width:1px;height:2px;background:#888"></div><div style="position:absolute;left:181.6px;top:326.2px;width:1px;height:2px;background:#888"></div><div style="position:absolute;left:189.2px;top:326.2px;width:1px;height:2px;background:#888"></div><div style="position:absolute;left:196.8px;top:326.2px;width:1px;height:2px;background:#888"></div><div style="position:absolute;left:204.5px;top:326.2px;width:1px;height:2px;background:#888"></div><div style="position:absolute;left:212.1px;top:326.2px;width:1px;height:2px;background:#888"></div><div style="position:absolute;left:219.7px;top:326.2px;width:1px;height:2px;background:#888"></div><div style="position:absolute;left:227.3px;top:326.2px;width:1px;height:2px;background:#888"></div><div style="position:absolute;left:242.6px;top:326.2px;width:1px;height:2px;background:#888"></div><div style="position:absolute;left:250.2px;top:326.2px;width:1px;height:2px;background:#888"></div><div style="position:absolute;left:257.8px;top:326.2px;width:1px;height:2px;background:#888"></div><div style="position:absolute;left:265.5px;top:326.2px;width:1px;height:2px;background:#888"></div><div style="position:absolute;left:273.1px;top:326.2px;width:1px;height:2px;background:#888"></div><div style="position:absolute;left:280.7px;top:326.2px;width:1px;height:2px;background:#888"></div><div style="position:absolute;left:288.3px;top:326.2px;width:1px;height:2px;background:#888"></div><div style="position:absolute;left:296.0px;top:326.2px;width:1px;height:2px;background:#888"></div><div style="position:absolute;left:303.6px;top:326.2px;width:1px;height:2px;background:#888"></div><div style="position:absolute;left:318.8px;top:326.2px;width:1px;height:2px;background:#888"></div><div style="position:absolute;left:326.5px;top:326.2px;width:1px;height:2px;background:#888"></div><div style="position:absolute;left:334.1px;top:326.2px;width:1px;height:2px;background:#888"></div><div style="position:absolute;left:341.7px;top:326.2px;width:1px;height:2px;background:#888"></div><div style="position:absolute;left:349.3px;top:326.2px;width:1px;height:2px;background:#888"></div><div style="position:absolute;left:357.0px;top:326.2px;width:1px;height:2px;background:#888"></div><div style="position:absolute;left:364.6px;top:326.2px;width:1px;height:2px;background:#888"></div><div style="position:absolute;left:372.2px;top:326.2px;width:1px;height:2px;background:#888"></div><div style="position:absolute;left:379.8px;top:326.2px;width:1px;height:2px;background:#888"></div><div style="position:absolute;left:395.1px;top:326.2px;width:1px;height:2px;background:#888"></div><div style="position:absolute;left:402.7px;top:326.2px;width:1px;height:2px;background:#888"></div><div style="position:absolute;left:410.3px;top:326.2px;width:1px;height:2px;background:#888"></div><div style="position:absolute;left:417.9px;top:326.2px;width:1px;height:2px;background:#888"></div><div style="position:absolute;left:425.6px;top:326.2px;width:1px;height:2px;background:#888"></div><div style="position:absolute;left:433.2px;top:326.2px;width:1px;height:2px;background:#888"></div><div style="position:absolute;left:440.8px;top:326.2px;width:1px;height:2px;background:#888"></div><div style="position:absolute;left:448.4px;top:326.2px;width:1px;height:2px;background:#888"></div><div style="position:absolute;left:456.1px;top:326.2px;width:1px;height:2px;background:#888"></div><div style="position:absolute;left:471.3px;top:326.2px;width:1px;height:2px;background:#888"></div><div style="position:absolute;left:478.9px;top:326.2px;width:1px;height:2px;background:#888"></div><div style="position:absolute;left:486.6px;top:326.2px;width:1px;height:2px;background:#888"></div><div style="position:absolute;left:494.2px;top:326.2px;width:1px;height:2px;background:#888"></div><div style="position:absolute;left:501.8px;top:326.2px;width:1px;height:2px;background:#888"></div><div style="position:absolute;left:509.4px;top:326.2px;width:1px;height:2px;background:#888"></div><div style="position:absolute;left:517.1px;top:326.2px;width:1px;height:2px;background:#888"></div><div style="position:absolute;left:524.7px;top:326.2px;width:1px;height:2px;background:#888"></div><div style="position:absolute;left:532.3px;top:326.2px;width:1px;height:2px;background:#888"></div><div style="position:absolute;left:547.6px;top:326.2px;width:1px;height:2px;background:#888"></div><div style="position:absolute;left:555.2px;top:326.2px;width:1px;height:2px;background:#888"></div><div style="position:absolute;left:562.8px;top:326.2px;width:1px;height:2px;background:#888"></div><div style="position:absolute;left:570.4px;top:326.2px;width:1px;height:2px;background:#888"></div><div style="position:absolute;left:578.1px;top:326.2px;width:1px;height:2px;background:#888"></div><div style="position:absolute;left:585.7px;top:326.2px;width:1px;height:2px;background:#888"></div><div style="position:absolute;left:593.3px;top:326.2px;width:1px;height:2px;background:#888"></div><div style="position:absolute;left:600.9px;top:326.2px;width:1px;height:2px;background:#888"></div><div style="position:absolute;left:608.5px;top:326.2px;width:1px;height:2px;background:#888"></div><div style="position:absolute;left:623.8px;top:326.2px;width:1px;height:2px;background:#888"></div><div style="position:absolute;left:631.4px;top:326.2px;width:1px;height:2px;background:#888"></div><div style="position:absolute;left:639.0px;top:326.2px;width:1px;height:2px;background:#888"></div><div style="position:absolute;left:646.7px;top:326.2px;width:1px;height:2px;background:#888"></div><div style="position:absolute;left:654.3px;top:326.2px;width:1px;height:2px;background:#888"></div><div style="position:absolute;left:661.9px;top:326.2px;width:1px;height:2px;background:#888"></div><div style="position:absolute;left:669.5px;top:326.2px;width:1px;height:2px;background:#888"></div><div style="position:absolute;left:677.2px;top:326.2px;width:1px;height:2px;background:#888"></div><div style="position:absolute;left:684.8px;top:326.2px;width:1px;height:2px;background:#888"></div><div style="position:absolute;left:700.0px;top:326.2px;width:1px;height:2px;background:#888"></div><div style="position:absolute;left:707.7px;top:326.2px;width:1px;height:2px;background:#888"></div><div style="position:absolute;left:715.3px;top:326.2px;width:1px;height:2px;background:#888"></div><div style="position:absolute;left:722.9px;top:326.2px;width:1px;height:2px;background:#888"></div><div style="position:absolute;left:730.5px;top:326.2px;width:1px;height:2px;background:#888"></div><div style="position:absolute;left:738.2px;top:326.2px;width:1px;height:2px;background:#888"></div><div style="position:absolute;left:745.8px;top:326.2px;width:1px;height:2px;background:#888"></div><div style="position:absolute;left:753.4px;top:326.2px;width:1px;height:2px;background:#888"></div><div style="position:absolute;left:761.0px;top:326.2px;width:1px;height:2px;background:#888"></div><div style="position:absolute;left:776.3px;top:326.2px;width:1px;height:2px;background:#888"></div><div style="position:absolute;left:783.9px;top:326.2px;width:1px;height:2px;background:#888"></div><div style="position:absolute;left:791.5px;top:326.2px;width:1px;height:2px;background:#888"></div><div style="position:absolute;left:799.2px;top:326.2px;width:1px;height:2px;background:#888"></div><div style="position:absolute;left:806.8px;top:326.2px;width:1px;height:2px;background:#888"></div><div style="position:absolute;left:814.4px;top:326.2px;width:1px;height:2px;background:#888"></div><div style="position:absolute;left:822.0px;top:326.2px;width:1px;height:2px;background:#888"></div><div style="position:absolute;left:829.7px;top:326.2px;width:1px;height:2px;background:#888"></div><div style="position:absolute;left:837.3px;top:326.2px;width:1px;height:2px;background:#888"></div><div style="position:absolute;left:852.5px;top:326.2px;width:1px;height:2px;background:#888"></div><div style="position:absolute;left:860.1px;top:326.2px;width:1px;height:2px;background:#888"></div><div style="position:absolute;left:867.8px;top:326.2px;width:1px;height:2px;background:#888"></div><div style="position:absolute;left:875.4px;top:326.2px;width:1px;height:2px;background:#888"></div><div style="position:absolute;left:883.0px;top:326.2px;width:1px;height:2px;background:#888"></div><div style="position:absolute;left:890.6px;top:326.2px;width:1px;height:2px;background:#888"></div><div style="position:absolute;left:898.3px;top:326.2px;width:1px;height:2px;background:#888"></div><div style="position:absolute;left:905.9px;top:326.2px;width:1px;height:2px;background:#888"></div><div style="position:absolute;left:913.5px;top:326.2px;width:1px;height:2px;background:#888"></div><div style="position:absolute;left:928.8px;top:326.2px;width:1px;height:2px;background:#888"></div><div style="position:absolute;left:936.4px;top:326.2px;width:1px;height:2px;background:#888"></div><div style="position:absolute;left:944.0px;top:326.2px;width:1px;height:2px;background:#888"></div><div style="position:absolute;left:951.6px;top:326.2px;width:1px;height:2px;background:#888"></div><div style="position:absolute;left:959.3px;top:326.2px;width:1px;height:2px;background:#888"></div><div style="position:absolute;left:966.9px;top:326.2px;width:1px;height:2px;background:#888"></div><div style="position:absolute;left:974.5px;top:326.2px;width:1px;height:2px;background:#888"></div><div style="position:absolute;left:982.1px;top:326.2px;width:1px;height:2px;background:#888"></div><div style="position:absolute;left:989.8px;top:326.2px;width:1px;height:2px;background:#888"></div><div style="position:absolute;left:1005.0px;top:326.2px;width:1px;height:2px;background:#888"></div><div style="position:absolute;left:1012.6px;top:326.2px;width:1px;height:2px;background:#888"></div><div style="position:absolute;left:1020.3px;top:326.2px;width:1px;height:2px;background:#888"></div><div style="position:absolute;left:1027.9px;top:326.2px;width:1px;height:2px;background:#888"></div><div style="position:absolute;left:1035.5px;top:326.2px;width:1px;height:2px;background:#888"></div><div style="position:absolute;left:1043.1px;top:326.2px;width:1px;height:2px;background:#888"></div><div style="position:absolute;left:1050.8px;top:326.2px;width:1px;height:2px;background:#888"></div><div style="position:absolute;left:1058.4px;top:326.2px;width:1px;height:2px;background:#888"></div><div style="position:absolute;left:1066.0px;top:326.2px;width:1px;height:2px;background:#888"></div><div style="position:absolute;left:1081.2px;top:326.2px;width:1px;height:2px;background:#888"></div><div style="position:absolute;left:1088.9px;top:326.2px;width:1px;height:2px;background:#888"></div><div style="position:absolute;left:1096.5px;top:326.2px;width:1px;height:2px;background:#888"></div><div style="position:absolute;left:1104.1px;top:326.2px;width:1px;height:2px;background:#888"></div><div style="position:absolute;left:1111.7px;top:326.2px;width:1px;height:2px;background:#888"></div><div style="position:absolute;left:1119.4px;top:326.2px;width:1px;height:2px;background:#888"></div><div style="position:absolute;left:1127.0px;top:326.2px;width:1px;height:2px;background:#888"></div><div style="position:absolute;left:1134.6px;top:326.2px;width:1px;height:2px;background:#888"></div><div style="position:absolute;left:1142.2px;top:326.2px;width:1px;height:2px;background:#888"></div><div style="position:absolute;left:1157.5px;top:326.2px;width:1px;height:2px;background:#888"></div><div style="position:absolute;left:1165.1px;top:326.2px;width:1px;height:2px;background:#888"></div><div style="position:absolute;left:1172.7px;top:326.2px;width:1px;height:2px;background:#888"></div><div style="position:absolute;left:1180.4px;top:326.2px;width:1px;height:2px;background:#888"></div><div style="position:absolute;left:1188.0px;top:326.2px;width:1px;height:2px;background:#888"></div><div style="position:absolute;left:1195.6px;top:326.2px;width:1px;height:2px;background:#888"></div><div style="position:absolute;left:1203.2px;top:326.2px;width:1px;height:2px;background:#888"></div><div style="position:absolute;left:1210.9px;top:326.2px;width:1px;height:2px;background:#888"></div><div style="position:absolute;left:1218.5px;top:326.2px;width:1px;height:2px;background:#888"></div><div style="position:absolute;left:1233.7px;top:326.2px;width:1px;height:2px;background:#888"></div><div style="position:absolute;left:1241.4px;top:326.2px;width:1px;height:2px;background:#888"></div><div style="position:absolute;left:1249.0px;top:326.2px;width:1px;height:2px;background:#888"></div><div style="position:absolute;left:1256.6px;top:326.2px;width:1px;height:2px;background:#888"></div><div style="position:absolute;left:1264.2px;top:326.2px;width:1px;height:2px;background:#888"></div><div style="position:absolute;left:1271.9px;top:326.2px;width:1px;height:2px;background:#888"></div><div style="position:absolute;left:1279.5px;top:326.2px;width:1px;height:2px;background:#888"></div><div style="position:absolute;left:1287.1px;top:326.2px;width:1px;height:2px;background:#888"></div><div style="position:absolute;left:1294.7px;top:326.2px;width:1px;height:2px;background:#888"></div><div style="position:absolute;left:1310.0px;top:326.2px;width:1px;height:2px;background:#888"></div><div style="position:absolute;left:1317.6px;top:326.2px;width:1px;height:2px;background:#888"></div><div style="position:absolute;left:1325.2px;top:326.2px;width:1px;height:2px;background:#888"></div><div style="position:absolute;left:1332.8px;top:326.2px;width:1px;height:2px;background:#888"></div><div style="position:absolute;left:1340.5px;top:326.2px;width:1px;height:2px;background:#888"></div><div style="position:absolute;left:1348.1px;top:326.2px;width:1px;height:2px;background:#888"></div><div style="position:absolute;left:1355.7px;top:326.2px;width:1px;height:2px;background:#888"></div><div style="position:absolute;left:1363.3px;top:326.2px;width:1px;height:2px;background:#888"></div><div style="position:absolute;left:1371.0px;top:326.2px;width:1px;height:2px;background:#888"></div><div style="position:absolute;left:1386.2px;top:326.2px;width:1px;height:2px;background:#888"></div><div style="position:absolute;left:1393.8px;top:326.2px;width:1px;height:2px;background:#888"></div><div style="position:absolute;left:1401.5px;top:326.2px;width:1px;height:2px;background:#888"></div><div style="position:absolute;left:1409.1px;top:326.2px;width:1px;height:2px;background:#888"></div><div style="position:absolute;left:1416.7px;top:326.2px;width:1px;height:2px;background:#888"></div><div style="position:absolute;left:1424.3px;top:326.2px;width:1px;height:2px;background:#888"></div><div style="position:absolute;left:1432.0px;top:326.2px;width:1px;height:2px;background:#888"></div><div style="position:absolute;left:1439.6px;top:326.2px;width:1px;height:2px;background:#888"></div><div style="position:absolute;left:1447.2px;top:326.2px;width:1px;height:2px;background:#888"></div><div style="position:absolute;left:1462.5px;top:326.2px;width:1px;height:2px;background:#888"></div><div style="position:absolute;left:1470.1px;top:326.2px;width:1px;height:2px;background:#888"></div><div style="position:absolute;left:1477.7px;top:326.2px;width:1px;height:2px;background:#888"></div><div style="position:absolute;left:1485.3px;top:326.2px;width:1px;height:2px;background:#888"></div><div style="position:absolute;left:1493.0px;top:326.2px;width:1px;height:2px;background:#888"></div><div style="position:absolute;left:1500.6px;top:326.2px;width:1px;height:2px;background:#888"></div><div style="position:absolute;left:1508.2px;top:326.2px;width:1px;height:2px;background:#888"></div><div style="position:absolute;left:1515.8px;top:326.2px;width:1px;height:2px;background:#888"></div><div style="position:absolute;left:1523.5px;top:326.2px;width:1px;height:2px;background:#888"></div><div style="position:absolute;left:1538.7px;top:326.2px;width:1px;height:2px;background:#888"></div><div style="position:absolute;left:1546.3px;top:326.2px;width:1px;height:2px;background:#888"></div><div style="position:absolute;left:1554.0px;top:326.2px;width:1px;height:2px;background:#888"></div><div style="position:absolute;left:1561.6px;top:326.2px;width:1px;height:2px;background:#888"></div><div style="position:absolute;left:1569.2px;top:326.2px;width:1px;height:2px;background:#888"></div><div style="position:absolute;left:1576.8px;top:326.2px;width:1px;height:2px;background:#888"></div><div style="position:absolute;left:1584.4px;top:326.2px;width:1px;height:2px;background:#888"></div><div style="position:absolute;left:1592.1px;top:326.2px;width:1px;height:2px;background:#888"></div><div style="position:absolute;left:1599.7px;top:326.2px;width:1px;height:2px;background:#888"></div><div style="position:absolute;left:1614.9px;top:326.2px;width:1px;height:2px;background:#888"></div><div style="position:absolute;left:1622.6px;top:326.2px;width:1px;height:2px;background:#888"></div><div style="position:absolute;left:1630.2px;top:326.2px;width:1px;height:2px;background:#888"></div><div style="position:absolute;left:1637.8px;top:326.2px;width:1px;height:2px;background:#888"></div><div style="position:absolute;left:1645.4px;top:326.2px;width:1px;height:2px;background:#888"></div><div style="position:absolute;left:1653.1px;top:326.2px;width:1px;height:2px;background:#888"></div><div style="position:absolute;left:1660.7px;top:326.2px;width:1px;height:2px;background:#888"></div><div style="position:absolute;left:1668.3px;top:326.2px;width:1px;height:2px;background:#888"></div><div style="position:absolute;left:1675.9px;top:326.2px;width:1px;height:2px;background:#888"></div><div style="position:absolute;left:1691.2px;top:326.2px;width:1px;height:2px;background:#888"></div><div style="position:absolute;left:1698.8px;top:326.2px;width:1px;height:2px;background:#888"></div><div style="position:absolute;left:1706.4px;top:326.2px;width:1px;height:2px;background:#888"></div><div style="position:absolute;left:1714.1px;top:326.2px;width:1px;height:2px;background:#888"></div><div style="position:absolute;left:1721.7px;top:326.2px;width:1px;height:2px;background:#888"></div><div style="position:absolute;left:1729.3px;top:326.2px;width:1px;height:2px;background:#888"></div><div style="position:absolute;left:1736.9px;top:326.2px;width:1px;height:2px;background:#888"></div><div style="position:absolute;left:1744.6px;top:326.2px;width:1px;height:2px;background:#888"></div><div style="position:absolute;left:1752.2px;top:326.2px;width:1px;height:2px;background:#888"></div><div style="position:absolute;left:1767.4px;top:326.2px;width:1px;height:2px;background:#888"></div><div style="position:absolute;left:1775.1px;top:326.2px;width:1px;height:2px;background:#888"></div><div style="position:absolute;left:1782.7px;top:326.2px;width:1px;height:2px;background:#888"></div><div style="position:absolute;left:1790.3px;top:326.2px;width:1px;height:2px;background:#888"></div><div style="position:absolute;left:1797.9px;top:326.2px;width:1px;height:2px;background:#888"></div><div style="position:absolute;left:1805.5px;top:326.2px;width:1px;height:2px;background:#888"></div><div style="position:absolute;left:1813.2px;top:326.2px;width:1px;height:2px;background:#888"></div><div style="position:absolute;left:1820.8px;top:326.2px;width:1px;height:2px;background:#888"></div><div style="position:absolute;left:1828.4px;top:326.2px;width:1px;height:2px;background:#888"></div><div style="position:absolute;left:1843.7px;top:326.2px;width:1px;height:2px;background:#888"></div><div style="position:absolute;left:1851.3px;top:326.2px;width:1px;height:2px;background:#888"></div><div style="position:absolute;left:1858.9px;top:326.2px;width:1px;height:2px;background:#888"></div><div style="position:absolute;left:1866.5px;top:326.2px;width:1px;height:2px;background:#888"></div><div style="position:absolute;left:1874.2px;top:326.2px;width:1px;height:2px;background:#888"></div><div style="position:absolute;left:1881.8px;top:326.2px;width:1px;height:2px;background:#888"></div><div style="position:absolute;left:1889.4px;top:326.2px;width:1px;height:2px;background:#888"></div><div style="position:absolute;left:1897.0px;top:326.2px;width:1px;height:2px;background:#888"></div><div style="position:absolute;left:1904.7px;top:326.2px;width:1px;height:2px;background:#888"></div><div style="position:absolute;left:1919.9px;top:326.2px;width:1px;height:2px;background:#888"></div><div style="position:absolute;left:1927.5px;top:326.2px;width:1px;height:2px;background:#888"></div><div style="position:absolute;left:1935.2px;top:326.2px;width:1px;height:2px;background:#888"></div><div style="position:absolute;left:1942.8px;top:326.2px;width:1px;height:2px;background:#888"></div><div style="position:absolute;left:1950.4px;top:326.2px;width:1px;height:2px;background:#888"></div><div style="position:absolute;left:1958.0px;top:326.2px;width:1px;height:2px;background:#888"></div><div style="position:absolute;left:1965.7px;top:326.2px;width:1px;height:2px;background:#888"></div><div style="position:absolute;left:1973.3px;top:326.2px;width:1px;height:2px;background:#888"></div><div style="position:absolute;left:1980.9px;top:326.2px;width:1px;height:2px;background:#888"></div>
<div style="position:absolute;left:7px;top:311.5px;width:1.4px;height:21px;background:#7c7c7c;"></div>
<div style="position:absolute;left:7.5px;top:310.65px;font:bold 14px/14px 'Liberation Sans', sans-serif;color:#333;white-space:pre;">1</div>
<div style="position:absolute;left:82.5px;top:311.5px;width:1.4px;height:21px;background:#7c7c7c;"></div>
<div style="position:absolute;left:84.97958px;top:310.65px;font:normal 14px/14px 'Liberation Sans', sans-serif;color:#333;white-space:pre;">100</div>
<div style="position:absolute;left:158.5px;top:311.5px;width:1.4px;height:21px;background:#7c7c7c;"></div>
<div style="position:absolute;left:161.22158px;top:310.65px;font:normal 14px/14px 'Liberation Sans', sans-serif;color:#333;white-space:pre;">200</div>
<div style="position:absolute;left:235.0px;top:311.5px;width:1.4px;height:21px;background:#7c7c7c;"></div>
<div style="position:absolute;left:237.46358px;top:310.65px;font:normal 14px/14px 'Liberation Sans', sans-serif;color:#333;white-space:pre;">300</div>
<div style="position:absolute;left:311.0px;top:311.5px;width:1.4px;height:21px;background:#7c7c7c;"></div>
<div style="position:absolute;left:313.70558px;top:310.65px;font:normal 14px/14px 'Liberation Sans', sans-serif;color:#333;white-space:pre;">400</div>
<div style="position:absolute;left:387.5px;top:311.5px;width:1.4px;height:21px;background:#7c7c7c;"></div>
<div style="position:absolute;left:389.94758px;top:310.65px;font:normal 14px/14px 'Liberation Sans', sans-serif;color:#333;white-space:pre;">500</div>
<div style="position:absolute;left:463.5px;top:311.5px;width:1.4px;height:21px;background:#7c7c7c;"></div>
<div style="position:absolute;left:466.18958px;top:310.65px;font:normal 14px/14px 'Liberation Sans', sans-serif;color:#333;white-space:pre;">600</div>
<div style="position:absolute;left:540.0px;top:311.5px;width:1.4px;height:21px;background:#7c7c7c;"></div>
<div style="position:absolute;left:542.4315799999999px;top:310.65px;font:normal 14px/14px 'Liberation Sans', sans-serif;color:#333;white-space:pre;">700</div>
<div style="position:absolute;left:616.0px;top:311.5px;width:1.4px;height:21px;background:#7c7c7c;"></div>
<div style="position:absolute;left:618.67358px;top:310.65px;font:normal 14px/14px 'Liberation Sans', sans-serif;color:#333;white-space:pre;">800</div>
<div style="position:absolute;left:692.5px;top:311.5px;width:1.4px;height:21px;background:#7c7c7c;"></div>
<div style="position:absolute;left:694.91558px;top:310.65px;font:normal 14px/14px 'Liberation Sans', sans-serif;color:#333;white-space:pre;">900</div>
<div style="position:absolute;left:768.5px;top:311.5px;width:1.4px;height:21px;background:#7c7c7c;"></div>
<div style="position:absolute;left:771.1575799999999px;top:310.65px;font:normal 14px/14px 'Liberation Sans', sans-serif;color:#333;white-space:pre;">1 K</div>
<div style="position:absolute;left:845.0px;top:311.5px;width:1.4px;height:21px;background:#7c7c7c;"></div>
<div style="position:absolute;left:847.39958px;top:310.65px;font:normal 14px/14px 'Liberation Sans', sans-serif;color:#333;white-space:pre;">1,100</div>
<div style="position:absolute;left:921.0px;top:311.5px;width:1.4px;height:21px;background:#7c7c7c;"></div>
<div style="position:absolute;left:923.64158px;top:310.65px;font:normal 14px/14px 'Liberation Sans', sans-serif;color:#333;white-space:pre;">1,200</div>
<div style="position:absolute;left:997.5px;top:311.5px;width:1.4px;height:21px;background:#7c7c7c;"></div>
<div style="position:absolute;left:999.8835799999999px;top:310.65px;font:normal 14px/14px 'Liberation Sans', sans-serif;color:#333;white-space:pre;">1,300</div>
<div style="position:absolute;left:1073.5px;top:311.5px;width:1.4px;height:21px;background:#7c7c7c;"></div>
<div style="position:absolute;left:1076.12558px;top:310.65px;font:normal 14px/14px 'Liberation Sans', sans-serif;color:#333;white-space:pre;">1,400</div>
<div style="position:absolute;left:1150.0px;top:311.5px;width:1.4px;height:21px;background:#7c7c7c;"></div>
<div style="position:absolute;left:1152.36758px;top:310.65px;font:normal 14px/14px 'Liberation Sans', sans-serif;color:#333;white-space:pre;">1,500</div>
<div style="position:absolute;left:1226.0px;top:311.5px;width:1.4px;height:21px;background:#7c7c7c;"></div>
<div style="position:absolute;left:1228.60958px;top:310.65px;font:normal 14px/14px 'Liberation Sans', sans-serif;color:#333;white-space:pre;">1,600</div>
<div style="position:absolute;left:1302.5px;top:311.5px;width:1.4px;height:21px;background:#7c7c7c;"></div>
<div style="position:absolute;left:1304.85158px;top:310.65px;font:normal 14px/14px 'Liberation Sans', sans-serif;color:#333;white-space:pre;">1,700</div>
<div style="position:absolute;left:1378.5px;top:311.5px;width:1.4px;height:21px;background:#7c7c7c;"></div>
<div style="position:absolute;left:1381.09358px;top:310.65px;font:normal 14px/14px 'Liberation Sans', sans-serif;color:#333;white-space:pre;">1,800</div>
<div style="position:absolute;left:1455.0px;top:311.5px;width:1.4px;height:21px;background:#7c7c7c;"></div>
<div style="position:absolute;left:1457.33558px;top:310.65px;font:normal 14px/14px 'Liberation Sans', sans-serif;color:#333;white-space:pre;">1,900</div>
<div style="position:absolute;left:1531.0px;top:311.5px;width:1.4px;height:21px;background:#7c7c7c;"></div>
<div style="position:absolute;left:1533.57758px;top:310.65px;font:normal 14px/14px 'Liberation Sans', sans-serif;color:#333;white-space:pre;">2 K</div>
<div style="position:absolute;left:1607.5px;top:311.5px;width:1.4px;height:21px;background:#7c7c7c;"></div>
<div style="position:absolute;left:1609.8195799999999px;top:310.65px;font:normal 14px/14px 'Liberation Sans', sans-serif;color:#333;white-space:pre;">2,100</div>
<div style="position:absolute;left:1683.5px;top:311.5px;width:1.4px;height:21px;background:#7c7c7c;"></div>
<div style="position:absolute;left:1686.06158px;top:310.65px;font:normal 14px/14px 'Liberation Sans', sans-serif;color:#333;white-space:pre;">2,200</div>
<div style="position:absolute;left:1760.0px;top:311.5px;width:1.4px;height:21px;background:#7c7c7c;"></div>
<div style="position:absolute;left:1762.30358px;top:310.65px;font:normal 14px/14px 'Liberation Sans', sans-serif;color:#333;white-space:pre;">2,300</div>
<div style="position:absolute;left:1836.0px;top:311.5px;width:1.4px;height:21px;background:#7c7c7c;"></div>
<div style="position:absolute;left:1838.54558px;top:310.65px;font:normal 14px/14px 'Liberation Sans', sans-serif;color:#333;white-space:pre;">2,400</div>
<div style="position:absolute;left:1912.5px;top:311.5px;width:1.4px;height:21px;background:#7c7c7c;"></div>
<div style="position:absolute;left:1381px;width:600px;text-align:right;top:310.65px;font:normal 14px/14px 'Liberation Sans', sans-serif;color:#333;white-space:pre;">2,590</div>
<div style="position:absolute;left:7px;top:176px;width:1974px;height:14px;background:linear-gradient(#6e6e6e,#8c8c8c 20%,#b4b4b4 50%,#8c8c8c 80%,#666);"></div>
<div style="position:absolute;left:7px;top:196px;width:1974px;height:20px;background:linear-gradient(#b6e0a8,#e4f3de 45%,#ffffff);"></div>
<div style="position:absolute;left:83px;top:190px;width:1.4px;height:120px;background:rgba(0,0,0,0.075);"></div>
<div style="position:absolute;left:159px;top:190px;width:1.4px;height:120px;background:rgba(0,0,0,0.075);"></div>
<div style="position:absolute;left:235px;top:190px;width:1.4px;height:120px;background:rgba(0,0,0,0.075);"></div>
<div style="position:absolute;left:312px;top:190px;width:1.4px;height:120px;background:rgba(0,0,0,0.075);"></div>
<div style="position:absolute;left:388px;top:190px;width:1.4px;height:120px;background:rgba(0,0,0,0.075);"></div>
<div style="position:absolute;left:464px;top:190px;width:1.4px;height:120px;background:rgba(0,0,0,0.075);"></div>
<div style="position:absolute;left:540px;top:190px;width:1.4px;height:120px;background:rgba(0,0,0,0.075);"></div>
<div style="position:absolute;left:617px;top:190px;width:1.4px;height:120px;background:rgba(0,0,0,0.075);"></div>
<div style="position:absolute;left:693px;top:190px;width:1.4px;height:120px;background:rgba(0,0,0,0.075);"></div>
<div style="position:absolute;left:769px;top:190px;width:1.4px;height:120px;background:rgba(0,0,0,0.075);"></div>
<div style="position:absolute;left:845px;top:190px;width:1.4px;height:120px;background:rgba(0,0,0,0.075);"></div>
<div style="position:absolute;left:922px;top:190px;width:1.4px;height:120px;background:rgba(0,0,0,0.075);"></div>
<div style="position:absolute;left:998px;top:190px;width:1.4px;height:120px;background:rgba(0,0,0,0.075);"></div>
<div style="position:absolute;left:1074px;top:190px;width:1.4px;height:120px;background:rgba(0,0,0,0.075);"></div>
<div style="position:absolute;left:1150px;top:190px;width:1.4px;height:120px;background:rgba(0,0,0,0.075);"></div>
<div style="position:absolute;left:1227px;top:190px;width:1.4px;height:120px;background:rgba(0,0,0,0.075);"></div>
<div style="position:absolute;left:1303px;top:190px;width:1.4px;height:120px;background:rgba(0,0,0,0.075);"></div>
<div style="position:absolute;left:1379px;top:190px;width:1.4px;height:120px;background:rgba(0,0,0,0.075);"></div>
<div style="position:absolute;left:1455px;top:190px;width:1.4px;height:120px;background:rgba(0,0,0,0.075);"></div>
<div style="position:absolute;left:1532px;top:190px;width:1.4px;height:120px;background:rgba(0,0,0,0.075);"></div>
<div style="position:absolute;left:1608px;top:190px;width:1.4px;height:120px;background:rgba(0,0,0,0.075);"></div>
<div style="position:absolute;left:1684px;top:190px;width:1.4px;height:120px;background:rgba(0,0,0,0.075);"></div>
<div style="position:absolute;left:1760px;top:190px;width:1.4px;height:120px;background:rgba(0,0,0,0.075);"></div>
<div style="position:absolute;left:1837px;top:190px;width:1.4px;height:120px;background:rgba(0,0,0,0.075);"></div>
<div style="position:absolute;left:1913px;top:190px;width:1.4px;height:120px;background:rgba(0,0,0,0.075);"></div>
<div style="position:absolute;left:10px;top:198.51px;font:normal 15px/15px 'Liberation Mono', monospace;color:#555;white-space:pre;">(U)</div>
<div style="position:absolute;left:47px;top:196.98px;font:normal 17px/17px 'Liberation Mono', monospace;color:#5a5a5a;white-space:pre;">ORFfinder_2.1.52051707</div>
<div style="position:absolute;left:957px;top:200px;width:25px;height:14px;border:1px solid #bbb;border-radius:3px;background:linear-gradient(#f0f0f0,#cfcfcf);box-sizing:border-box;"></div>
<div style="position:absolute;left:1006px;top:200px;width:25px;height:14px;border:1px solid #bbb;border-radius:3px;background:linear-gradient(#f0f0f0,#cfcfcf);box-sizing:border-box;"></div>
<svg style="position:absolute;left:957px;top:200px" width="25" height="14" viewBox="0 0 25 14"><rect x="8" y="3" width="1.6" height="8" fill="#888"/><path d="M17 3 L11 7 L17 11Z" fill="#888"/></svg>
<svg style="position:absolute;left:1006px;top:200px" width="25" height="14" viewBox="0 0 25 14"><rect x="15.4" y="3" width="1.6" height="8" fill="#888"/><path d="M8 3 L14 7 L8 11Z" fill="#888"/></svg>
<svg style="position:absolute;left:1922px;top:196px" width="16" height="16" viewBox="0 0 16 16"><circle cx="8" cy="8" r="7" fill="#4b5a9a"/><rect x="6.6" y="6" width="2.8" height="7" fill="#fff"/><circle cx="8" cy="3.8" r="1.5" fill="#fff"/></svg>
<svg style="position:absolute;left:1944px;top:197px" width="14" height="14" viewBox="-11 -11 22 22"><rect x="-2.3" y="-11" width="4.6" height="4.5" rx="1.6" fill="#777" transform="rotate(0.0)"/><rect x="-2.3" y="-11" width="4.6" height="4.5" rx="1.6" fill="#777" transform="rotate(36.0)"/><rect x="-2.3" y="-11" width="4.6" height="4.5" rx="1.6" fill="#777" transform="rotate(72.0)"/><rect x="-2.3" y="-11" width="4.6" height="4.5" rx="1.6" fill="#777" transform="rotate(108.0)"/><rect x="-2.3" y="-11" width="4.6" height="4.5" rx="1.6" fill="#777" transform="rotate(144.0)"/><rect x="-2.3" y="-11" width="4.6" height="4.5" rx="1.6" fill="#777" transform="rotate(180.0)"/><rect x="-2.3" y="-11" width="4.6" height="4.5" rx="1.6" fill="#777" transform="rotate(216.0)"/><rect x="-2.3" y="-11" width="4.6" height="4.5" rx="1.6" fill="#777" transform="rotate(252.0)"/><rect x="-2.3" y="-11" width="4.6" height="4.5" rx="1.6" fill="#777" transform="rotate(288.0)"/><rect x="-2.3" y="-11" width="4.6" height="4.5" rx="1.6" fill="#777" transform="rotate(324.0)"/><circle r="8.3" fill="#777"/><circle r="3.3" fill="#e8e8e8"/></svg>
<svg style="position:absolute;left:1966px;top:197px" width="13" height="13" viewBox="0 0 13 13"><path d="M2 2 L11 11 M11 2 L2 11" stroke="#e57a7a" stroke-width="2.6"/></svg>
<div style="position:absolute;left:7px;top:223.60px;font:normal 13px/13px 'Liberation Sans', sans-serif;color:#3468b5;white-space:pre;letter-spacing:-0.5px;-webkit-text-stroke:0.25px #3468b5">ORF1</div>
<div style="position:absolute;left:895.60562px;width:600px;text-align:right;top:223.60px;font:normal 13px/13px 'Liberation Sans', sans-serif;color:#3468b5;white-space:pre;letter-spacing:-0.5px;-webkit-text-stroke:0.25px #3468b5">ORF7</div>
<div style="position:absolute;left:1307.31242px;width:600px;text-align:right;top:223.60px;font:normal 13px/13px 'Liberation Sans', sans-serif;color:#3468b5;white-space:pre;letter-spacing:-0.5px;-webkit-text-stroke:0.25px #3468b5">ORF8</div>
<div style="position:absolute;left:491.0125px;top:245.60px;font:normal 13px/13px 'Liberation Sans', sans-serif;color:#3468b5;white-space:pre;letter-spacing:-0.5px;-webkit-text-stroke:0.25px #3468b5">ORF13</div>
<div style="position:absolute;left:-1.7627200000000585px;width:600px;text-align:right;top:245.60px;font:normal 13px/13px 'Liberation Sans', sans-serif;color:#3468b5;white-space:pre;letter-spacing:-0.5px;-webkit-text-stroke:0.25px #3468b5">ORF4</div>
<div style="position:absolute;left:820.37794px;top:245.60px;font:normal 13px/13px 'Liberation Sans', sans-serif;color:#3468b5;white-space:pre;letter-spacing:-0.5px;-webkit-text-stroke:0.25px #3468b5">ORF12</div>
<div style="position:absolute;left:592.16246px;width:600px;text-align:right;top:245.60px;font:normal 13px/13px 'Liberation Sans', sans-serif;color:#3468b5;white-space:pre;letter-spacing:-0.5px;-webkit-text-stroke:0.25px #3468b5">ORF2</div>
<div style="position:absolute;left:1036.65332px;width:600px;text-align:right;top:245.60px;font:normal 13px/13px 'Liberation Sans', sans-serif;color:#3468b5;white-space:pre;letter-spacing:-0.5px;-webkit-text-stroke:0.25px #3468b5">ORF5</div>
<div style="position:absolute;left:337.00365999999997px;top:267.60px;font:normal 13px/13px 'Liberation Sans', sans-serif;color:#3468b5;white-space:pre;letter-spacing:-0.5px;-webkit-text-stroke:0.25px #3468b5">ORF11</div>
<div style="position:absolute;left:-76.47987999999998px;width:600px;text-align:right;top:267.60px;font:normal 13px/13px 'Liberation Sans', sans-serif;color:#3468b5;white-space:pre;letter-spacing:-0.5px;-webkit-text-stroke:0.25px #3468b5">ORF3</div>
<div style="position:absolute;left:1219.88602px;top:267.60px;font:normal 13px/13px 'Liberation Sans', sans-serif;color:#3468b5;white-space:pre;letter-spacing:-0.5px;-webkit-text-stroke:0.25px #3468b5">ORF10</div>
<div style="position:absolute;left:1510.36804px;top:267.60px;font:normal 13px/13px 'Liberation Sans', sans-serif;color:#3468b5;white-space:pre;letter-spacing:-0.5px;-webkit-text-stroke:0.25px #3468b5">ORF9</div>
<div style="position:absolute;left:586.8255199999999px;width:600px;text-align:right;top:289.60px;font:normal 13px/13px 'Liberation Sans', sans-serif;color:#3468b5;white-space:pre;letter-spacing:-0.5px;-webkit-text-stroke:0.25px #3468b5">ORF6</div>
<svg style="position:absolute;left:0;top:0" width="1999" height="340" viewBox="0 0 1999 340"><defs><linearGradient id="bar" x1="0" y1="0" x2="0" y2="1"><stop offset="0" stop-color="#fbe0da"/><stop offset="0.08" stop-color="#d2361a"/><stop offset="0.22" stop-color="#d23a1e"/><stop offset="0.5" stop-color="#e5826f"/><stop offset="0.78" stop-color="#d5442a"/><stop offset="0.92" stop-color="#d2361a"/><stop offset="1" stop-color="#f6d0c8"/></linearGradient></defs><rect x="40.8" y="223" width="1141.6" height="14.5" fill="url(#bar)"/><path d="M109 224.5 L120 230 L109 235.5 L112 230 Z" fill="#fff"/><path d="M251 224.5 L262 230 L251 235.5 L254 230 Z" fill="#c4c4cc"/><path d="M393 224.5 L404 230 L393 235.5 L396 230 Z" fill="#c4c4cc"/><path d="M535 224.5 L546 230 L535 235.5 L538 230 Z" fill="#fff"/><path d="M678 224.5 L689 230 L678 235.5 L681 230 Z" fill="#fff"/><path d="M820 224.5 L831 230 L820 235.5 L823 230 Z" fill="#c4c4cc"/><path d="M962 224.5 L973 230 L962 235.5 L965 230 Z" fill="#fff"/><path d="M1103 224.5 L1114 230 L1103 235.5 L1106 230 Z" fill="#c4c4cc"/><rect x="1501.6" y="223" width="261.0" height="14.5" fill="url(#bar)"/><path d="M1555 224.5 L1566 230 L1555 235.5 L1558 230 Z" fill="#fff"/><path d="M1698 224.5 L1709 230 L1698 235.5 L1701 230 Z" fill="#fff"/><rect x="1913.3" y="223" width="67.7" height="14.5" fill="url(#bar)"/><path d="M1940 224.5 L1951 230 L1940 235.5 L1943 230 Z" fill="#fff"/><rect x="319.1" y="245" width="164.9" height="14.5" fill="url(#bar)"/><path d="M334 246.5 L323 252 L334 257.5 L331 252 Z" fill="#fff"/><path d="M478 246.5 L467 252 L478 257.5 L475 252 Z" fill="#c4c4cc"/><rect x="604.2" y="245" width="82.6" height="14.5" fill="url(#bar)"/><path d="M640 246.5 L651 252 L640 257.5 L643 252 Z" fill="#fff"/><rect x="733.1" y="245" width="80.3" height="14.5" fill="url(#bar)"/><path d="M778 246.5 L767 252 L778 257.5 L775 252 Z" fill="#fff"/><rect x="1198.2" y="245" width="306.7" height="14.5" fill="url(#bar)"/><path d="M1204 246.5 L1215 252 L1204 257.5 L1207 252 Z" fill="#fff"/><path d="M1346 246.5 L1357 252 L1346 257.5 L1349 252 Z" fill="#fff"/><path d="M1488 246.5 L1499 252 L1488 257.5 L1491 252 Z" fill="#c4c4cc"/><rect x="1642.7" y="245" width="87.2" height="14.5" fill="url(#bar)"/><path d="M1681 246.5 L1692 252 L1681 257.5 L1684 252 Z" fill="#fff"/><rect x="261.1" y="267" width="68.9" height="14.5" fill="url(#bar)"/><path d="M300 268.5 L289 274 L300 279.5 L297 274 Z" fill="#fff"/><rect x="529.5" y="267" width="62.8" height="14.5" fill="url(#bar)"/><path d="M555 268.5 L566 274 L555 279.5 L558 274 Z" fill="#fff"/><rect x="1125.7" y="267" width="87.2" height="14.5" fill="url(#bar)"/><path d="M1174 268.5 L1163 274 L1174 279.5 L1171 274 Z" fill="#fff"/><rect x="1411.6" y="267" width="91.7" height="14.5" fill="url(#bar)"/><path d="M1462 268.5 L1451 274 L1462 279.5 L1459 274 Z" fill="#fff"/><rect x="1192.8" y="289" width="71.1" height="14.5" fill="url(#bar)"/><path d="M1223 290.5 L1234 296 L1223 301.5 L1226 296 Z" fill="#fff"/><path d="M1966 225 L1972 230 L1966 235 M1971 225 L1977 230 L1971 235" stroke="#5a1a10" stroke-width="2" fill="none"/></svg>
<div style="position:absolute;left:312px;width:600px;text-align:center;top:224.34px;font:normal 12px/12px 'Liberation Sans', sans-serif;color:#f4d8d8;white-space:pre;">ORF1</div>
<div style="position:absolute;left:40px;top:170.5px;width:1143px;height:159px;background:rgba(40,40,255,0.15);"></div>
<div style="position:absolute;left:40px;top:148px;width:1px;height:181.5px;background:#3030ff;"></div>
<div style="position:absolute;left:1182px;top:172px;width:1.2px;height:157.5px;background:#3030ff;"></div>
<div style="position:absolute;left:39.5px;top:147.5px;width:68.5px;height:23px;background:rgba(70,70,255,0.88);"></div>
<svg style="position:absolute;left:27px;top:148px" width="14" height="23" viewBox="0 0 14 23"><path d="M14 0 L9 0 C3 1 0 6 0 11.5 C0 17 3 22 9 23 L14 23 Z" fill="#0000f0"/></svg>
<div style="position:absolute;left:40.3px;top:153.26px;font:bold 16px/16px 'Liberation Sans', sans-serif;color:#fff;white-space:pre;">ORF1</div>
<svg style="position:absolute;left:86px;top:149px" width="14" height="18" viewBox="0 0 14 18"><path d="M3.5 8 L3.5 5 C3.5 2 5.2 1 7 1 C8.8 1 10.5 2 10.5 5 L10.5 8" fill="none" stroke="#c4c4d0" stroke-width="1.8"/><rect x="1.5" y="8" width="11" height="9" rx="1" fill="#e8b060"/></svg>
<div style="position:absolute;left:7px;top:333px;width:1975px;height:32px;background:linear-gradient(#e6e6e6,#ececec);border-top:1px solid #d6d6d6;box-sizing:border-box;"></div>
<div style="position:absolute;left:26px;top:340.96px;font:normal 16px/16px 'Liberation Sans', sans-serif;color:#222;white-space:pre;">1: 1..2.6K (2,590 nt)</div>
<svg style="position:absolute;left:1775px;top:338px" width="24" height="24" viewBox="0 0 24 24"><rect x="1" y="1" width="22" height="22" fill="#f6f6f4" stroke="#e6e6ea" stroke-width="0.8"/><path d="M3 21 L18 6" stroke="#ddd" stroke-width="0.8"/><path d="M4.5 20 L5.5 16.5 L17 5 L19 7 L7.5 18.5 Z" fill="#e8c83a" stroke="#c8a830" stroke-width="0.5"/><circle cx="19.2" cy="4.6" r="1.8" fill="#c86070"/></svg>
<svg style="position:absolute;left:1812px;top:339px" width="23" height="23" viewBox="-11 -11 22 22"><rect x="-2.3" y="-11" width="4.6" height="4.5" rx="1.6" fill="#333" transform="rotate(0.0)"/><rect x="-2.3" y="-11" width="4.6" height="4.5" rx="1.6" fill="#333" transform="rotate(36.0)"/><rect x="-2.3" y="-11" width="4.6" height="4.5" rx="1.6" fill="#333" transform="rotate(72.0)"/><rect x="-2.3" y="-11" width="4.6" height="4.5" rx="1.6" fill="#333" transform="rotate(108.0)"/><rect x="-2.3" y="-11" width="4.6" height="4.5" rx="1.6" fill="#333" transform="rotate(144.0)"/><rect x="-2.3" y="-11" width="4.6" height="4.5" rx="1.6" fill="#333" transform="rotate(180.0)"/><rect x="-2.3" y="-11" width="4.6" height="4.5" rx="1.6" fill="#333" transform="rotate(216.0)"/><rect x="-2.3" y="-11" width="4.6" height="4.5" rx="1.6" fill="#333" transform="rotate(252.0)"/><rect x="-2.3" y="-11" width="4.6" height="4.5" rx="1.6" fill="#333" transform="rotate(288.0)"/><rect x="-2.3" y="-11" width="4.6" height="4.5" rx="1.6" fill="#333" transform="rotate(324.0)"/><circle r="8.3" fill="#333"/><circle r="3.3" fill="#e8e8e8"/></svg>
<div style="position:absolute;left:1842px;top:342.48px;font:normal 15.5px/15.5px 'Liberation Sans', sans-serif;color:#222;white-space:pre;">Tracks shown: 2/3</div>
<div style="position:absolute;left:1384px;width:600px;text-align:right;top:404.93px;font:bold 16.5px/16.5px 'Liberation Sans', sans-serif;color:#3a6bd0;white-space:pre;">Six-frame translation...</div>
<div style="position:absolute;left:55px;top:436.26px;font:bold 18px/18px 'Liberation Sans', sans-serif;color:#222;white-space:pre;">ORF1</div>
<div style="position:absolute;left:117px;top:436.26px;font:normal 18px/18px 'Liberation Sans', sans-serif;color:#222;white-space:pre;">(498 aa)</div>
<div style="position:absolute;left:232px;top:437.53px;font:bold 16.5px/16.5px 'Liberation Sans', sans-serif;color:#3a6bd0;white-space:pre;">Display ORF as...</div>
<div style="position:absolute;left:428px;top:425px;width:85px;height:40px;background:#0071bd;border-radius:7px;"></div>
<div style="position:absolute;left:170.5px;width:600px;text-align:center;top:436.26px;font:bold 18px/18px 'Liberation Sans', sans-serif;color:#fff;white-space:pre;">Mark</div>
<div style="position:absolute;left:41px;top:469px;width:555px;height:228px;border:2px solid #8e9198;background:#fff;box-sizing:border-box;"></div>
<div style="position:absolute;left:52.5px;top:487.25px;font:normal 15.6px/15.6px 'Liberation Mono', monospace;color:#1a1a1a;white-space:pre;transform:scaleY(0.82);transform-origin:0 11.95px;-webkit-text-stroke:0.35px #1a1a1a">>lcl|ORF1</div>
<div style="position:absolute;left:52.5px;top:504.42px;font:normal 15.6px/15.6px 'Liberation Mono', monospace;color:#1a1a1a;white-space:pre;transform:scaleY(0.82);transform-origin:0 11.95px;-webkit-text-stroke:0.35px #1a1a1a">MVTRITGLESGMDIDDIVSKLMQTERAPLDKLTQKKQTLEWQRDSYREVN</div>
<div style="position:absolute;left:52.5px;top:521.59px;font:normal 15.6px/15.6px 'Liberation Mono', monospace;color:#1a1a1a;white-space:pre;transform:scaleY(0.82);transform-origin:0 11.95px;-webkit-text-stroke:0.35px #1a1a1a">SKIKELQDYMSKNTLTYPSTYQSKTVTSSNESVLTATGSVSAPNSSSTVE</div>
<div style="position:absolute;left:52.5px;top:538.76px;font:normal 15.6px/15.6px 'Liberation Mono', monospace;color:#1a1a1a;white-space:pre;transform:scaleY(0.82);transform-origin:0 11.95px;-webkit-text-stroke:0.35px #1a1a1a">VASLATAATYKANNYTGYTQGDYNLAFNVVAPGETTAKTVNISVTSADTI</div>
<div style="position:absolute;left:52.5px;top:555.93px;font:normal 15.6px/15.6px 'Liberation Mono', monospace;color:#1a1a1a;white-space:pre;transform:scaleY(0.82);transform-origin:0 11.95px;-webkit-text-stroke:0.35px #1a1a1a">DNVISKLNSSDLGVSAFKDKIWNGTEYVETIAFSSKATGAGGSIQAADSA</div>
<div style="position:absolute;left:52.5px;top:573.10px;font:normal 15.6px/15.6px 'Liberation Mono', monospace;color:#1a1a1a;white-space:pre;transform:scaleY(0.82);transform-origin:0 11.95px;-webkit-text-stroke:0.35px #1a1a1a">TADFMSGQLGFSLDADNKLTAYKEGTNAKVTINGFEMEKLTNNFTVNGVT</div>
<div style="position:absolute;left:52.5px;top:590.27px;font:normal 15.6px/15.6px 'Liberation Mono', monospace;color:#1a1a1a;white-space:pre;transform:scaleY(0.82);transform-origin:0 11.95px;-webkit-text-stroke:0.35px #1a1a1a">YSIKNTTAATGPVTTSVSTDVDGIYNQIKEFVDKYNELVDSLNEKLKEEK</div>
<div style="position:absolute;left:52.5px;top:607.44px;font:normal 15.6px/15.6px 'Liberation Mono', monospace;color:#1a1a1a;white-space:pre;transform:scaleY(0.82);transform-origin:0 11.95px;-webkit-text-stroke:0.35px #1a1a1a">YRDYTPLTSEQKEAMSDKEVELWEEKAKSGLLRNDSSISTGTNQMRTDFY</div>
<div style="position:absolute;left:52.5px;top:624.61px;font:normal 15.6px/15.6px 'Liberation Mono', monospace;color:#1a1a1a;white-space:pre;transform:scaleY(0.82);transform-origin:0 11.95px;-webkit-text-stroke:0.35px #1a1a1a">TQVNADGKTYQLTEFGITTSSAYQLRGHLEINEEKLKAKIAEDPQGVANL</div>
<div style="position:absolute;left:52.5px;top:641.78px;font:normal 15.6px/15.6px 'Liberation Mono', monospace;color:#1a1a1a;white-space:pre;transform:scaleY(0.82);transform-origin:0 11.95px;-webkit-text-stroke:0.35px #1a1a1a">FTSGTNDSNYSDKGIMKRITNTLRSTVKSIEAKAGNSTMGASSYSIGKNL</div>
<div style="position:absolute;left:52.5px;top:658.95px;font:normal 15.6px/15.6px 'Liberation Mono', monospace;color:#1a1a1a;white-space:pre;transform:scaleY(0.82);transform-origin:0 11.95px;-webkit-text-stroke:0.35px #1a1a1a">NSISTEITDMQDRLNTIENRYYSKFSAMDSAIQKMNEQASYLSQLLVQ</div>
<svg style="position:absolute;left:580px;top:681px" width="14" height="14" viewBox="0 0 14 14"><path d="M2 12 L12 2 M7 12 L12 7" stroke="#777" stroke-width="1.1"/></svg>
<div style="position:absolute;left:62px;top:736.86px;font:bold 18px/18px 'Liberation Sans', sans-serif;color:#222;white-space:pre;">ORF1</div>
<div style="position:absolute;left:54px;top:764px;width:151px;height:41px;background:#0071bd;border-radius:7px;"></div>
<div style="position:absolute;left:-170.5px;width:600px;text-align:center;top:776.06px;font:bold 18px/18px 'Liberation Sans', sans-serif;color:#fff;white-space:pre;">SmartBLAST</div>
<div style="position:absolute;left:54px;top:813px;width:100px;height:40.5px;background:#0071bd;border-radius:7px;"></div>
<div style="position:absolute;left:-196px;width:600px;text-align:center;top:824.76px;font:bold 18px/18px 'Liberation Sans', sans-serif;color:#fff;white-space:pre;">BLAST</div>
<div style="position:absolute;left:241.5px;top:727px;width:1.2px;height:126px;background:#999;"></div>
<div style="position:absolute;left:291.5px;top:736.86px;font:normal 18px/18px 'Liberation Sans', sans-serif;color:#222;white-space:pre;">Marked set ( <span style="color:#1f4a8a">0</span> )</div>
<div style="position:absolute;left:284px;top:773.13px;font:bold 16.5px/16.5px 'Liberation Sans', sans-serif;color:#9a9a9a;white-space:pre;">SmartBLAST best hit titles...</div>
<div style="position:absolute;left:511px;top:768px;width:24px;height:22px;background:#e4e4e4;"></div>
<svg style="position:absolute;left:512px;top:769px" width="22" height="21" viewBox="0 0 22 21"><defs><radialGradient id="hg" cx="0.4" cy="0.35" r="0.7"><stop offset="0" stop-color="#bcd6f4"/><stop offset="1" stop-color="#5b8fd0"/></radialGradient></defs><circle cx="11" cy="10.5" r="9" fill="url(#hg)" stroke="#7ea6d8" stroke-width="1"/><text x="11" y="15" text-anchor="middle" font-family="Liberation Sans" font-weight="bold" font-size="13" fill="#fff">?</text></svg>
<div style="position:absolute;left:283px;top:801.5px;width:100px;height:40.5px;background:#d5d6d9;border-radius:7px;"></div>
<div style="position:absolute;left:33px;width:600px;text-align:center;top:813.06px;font:bold 18px/18px 'Liberation Sans', sans-serif;color:#777;white-space:pre;">BLAST</div>
<div style="position:absolute;left:0px;top:853px;width:1999px;height:27px;background:linear-gradient(rgba(255,255,255,0),rgba(238,238,238,0.9));"></div>
<div style="position:absolute;left:0;top:866px;width:1999px;height:14px;overflow:hidden"><div style="position:absolute;left:110px;top:6.8px;font:normal 18px/18px 'Liberation Sans',sans-serif;color:#985735;white-space:pre">BLAST Database:</div></div>
<div style="position:absolute;left:0px;top:880px;width:1999px;height:2px;background:#111;"></div>
<div style="position:absolute;left:664px;top:434.33px;font:bold 16.5px/16.5px 'Liberation Sans', sans-serif;color:#3a6bd0;white-space:pre;">Mark subset...</div>
<div style="position:absolute;left:812px;top:436.26px;font:normal 18px/18px 'Liberation Sans', sans-serif;color:#1f3f6e;white-space:pre;">Marked: 0</div>
<div style="position:absolute;left:917px;top:425px;width:222px;height:40px;background:#d5d6d9;border-radius:8px;"></div>
<div style="position:absolute;left:728px;width:600px;text-align:center;top:437.10px;font:bold 17.6px/17.6px 'Liberation Sans', sans-serif;color:#777;white-space:pre;">Download marked set</div>
<div style="position:absolute;left:1145px;top:436.06px;font:normal 18px/18px 'Liberation Sans', sans-serif;color:#222;white-space:pre;">as</div>
<div style="position:absolute;left:1169.5px;top:428.5px;width:158px;height:28px;border:1.5px solid #555;background:#fff;box-sizing:border-box;"></div>
<div style="position:absolute;left:1179px;top:436.06px;font:normal 18px/18px 'Liberation Sans', sans-serif;color:#111;white-space:pre;">Protein FASTA</div>
<svg style="position:absolute;left:1309px;top:438px" width="14" height="10" viewBox="0 0 14 10"><path d="M2 2 L7 7 L12 2" fill="none" stroke="#222" stroke-width="1.4"/></svg>
<div style="position:absolute;left:671px;top:467px;width:665px;height:408px;border:2px solid #adc1da;box-sizing:border-box;overflow:hidden;background:#fff">
<div style="position:absolute;left:0;top:0;width:638.0px;height:33.9px;background:linear-gradient(#ffffff,#ebebeb);border-bottom:1.5px solid #c8d8ea;box-sizing:border-box"></div>
<div style="position:absolute;left:96.9px;top:0;width:1px;height:33.9px;background:#d4d4d4"></div>
<div style="position:absolute;left:202.7px;top:0;width:1px;height:33.9px;background:#d4d4d4"></div>
<div style="position:absolute;left:307.8px;top:0;width:1px;height:33.9px;background:#d4d4d4"></div>
<div style="position:absolute;left:398.1px;top:0;width:1px;height:33.9px;background:#d4d4d4"></div>
<div style="position:absolute;left:487.9px;top:0;width:1px;height:33.9px;background:#d4d4d4"></div>
</div>
<div style="position:absolute;left:683px;top:476.06px;font:normal 18px/18px 'Liberation Sans', sans-serif;color:#1f3f6e;white-space:pre;">Label</div>
<div style="position:absolute;left:780px;top:476.06px;font:normal 18px/18px 'Liberation Sans', sans-serif;color:#1f3f6e;white-space:pre;">Strand</div>
<div style="position:absolute;left:886px;top:476.06px;font:normal 18px/18px 'Liberation Sans', sans-serif;color:#1f3f6e;white-space:pre;">Frame</div>
<div style="position:absolute;left:991.3px;top:476.06px;font:normal 18px/18px 'Liberation Sans', sans-serif;color:#1f3f6e;white-space:pre;">Start</div>
<div style="position:absolute;left:1081.5px;top:476.06px;font:normal 18px/18px 'Liberation Sans', sans-serif;color:#1f3f6e;white-space:pre;">Stop</div>
<div style="position:absolute;left:1171px;top:476.06px;font:normal 18px/18px 'Liberation Sans', sans-serif;color:#1f3f6e;white-space:pre;">Length (nt | aa)</div>
<div style="position:absolute;left:155px;width:600px;text-align:right;top:512.06px;font:normal 18px/18px 'Liberation Sans', sans-serif;color:#222;white-space:pre;">ORF1</div>
<div style="position:absolute;left:522px;width:600px;text-align:center;top:512.06px;font:normal 18px/18px 'Liberation Sans', sans-serif;color:#222;white-space:pre;">+</div>
<div style="position:absolute;left:627.7px;width:600px;text-align:center;top:512.06px;font:normal 18px/18px 'Liberation Sans', sans-serif;color:#222;white-space:pre;">1</div>
<div style="position:absolute;left:456px;width:600px;text-align:right;top:512.06px;font:normal 18px/18px 'Liberation Sans', sans-serif;color:#222;white-space:pre;">46</div>
<div style="position:absolute;left:545px;width:600px;text-align:right;top:512.06px;font:normal 18px/18px 'Liberation Sans', sans-serif;color:#222;white-space:pre;">1542</div>
<div style="position:absolute;left:696px;width:600px;text-align:right;top:512.06px;font:normal 18px/18px 'Liberation Sans', sans-serif;color:#222;white-space:pre;">1497 | 498</div>
<div style="position:absolute;left:155px;width:600px;text-align:right;top:547.56px;font:normal 18px/18px 'Liberation Sans', sans-serif;color:#222;white-space:pre;">ORF2</div>
<div style="position:absolute;left:522px;width:600px;text-align:center;top:547.56px;font:normal 18px/18px 'Liberation Sans', sans-serif;color:#222;white-space:pre;">+</div>
<div style="position:absolute;left:627.7px;width:600px;text-align:center;top:547.56px;font:normal 18px/18px 'Liberation Sans', sans-serif;color:#222;white-space:pre;">1</div>
<div style="position:absolute;left:456px;width:600px;text-align:right;top:547.56px;font:normal 18px/18px 'Liberation Sans', sans-serif;color:#222;white-space:pre;">1564</div>
<div style="position:absolute;left:545px;width:600px;text-align:right;top:547.56px;font:normal 18px/18px 'Liberation Sans', sans-serif;color:#222;white-space:pre;">1965</div>
<div style="position:absolute;left:696px;width:600px;text-align:right;top:547.56px;font:normal 18px/18px 'Liberation Sans', sans-serif;color:#222;white-space:pre;">402 | 133</div>
<div style="position:absolute;left:155px;width:600px;text-align:right;top:583.06px;font:normal 18px/18px 'Liberation Sans', sans-serif;color:#222;white-space:pre;">ORF7</div>
<div style="position:absolute;left:522px;width:600px;text-align:center;top:583.06px;font:normal 18px/18px 'Liberation Sans', sans-serif;color:#222;white-space:pre;">+</div>
<div style="position:absolute;left:627.7px;width:600px;text-align:center;top:583.06px;font:normal 18px/18px 'Liberation Sans', sans-serif;color:#222;white-space:pre;">3</div>
<div style="position:absolute;left:456px;width:600px;text-align:right;top:583.06px;font:normal 18px/18px 'Liberation Sans', sans-serif;color:#222;white-space:pre;">1962</div>
<div style="position:absolute;left:545px;width:600px;text-align:right;top:583.06px;font:normal 18px/18px 'Liberation Sans', sans-serif;color:#222;white-space:pre;">2303</div>
<div style="position:absolute;left:696px;width:600px;text-align:right;top:583.06px;font:normal 18px/18px 'Liberation Sans', sans-serif;color:#222;white-space:pre;">342 | 113</div>
<div style="position:absolute;left:155px;width:600px;text-align:right;top:618.56px;font:normal 18px/18px 'Liberation Sans', sans-serif;color:#222;white-space:pre;">ORF13</div>
<div style="position:absolute;left:522px;width:600px;text-align:center;top:618.56px;font:normal 18px/18px 'Liberation Sans', sans-serif;color:#222;white-space:pre;">-</div>
<div style="position:absolute;left:627.7px;width:600px;text-align:center;top:618.56px;font:normal 18px/18px 'Liberation Sans', sans-serif;color:#222;white-space:pre;">3</div>
<div style="position:absolute;left:456px;width:600px;text-align:right;top:618.56px;font:normal 18px/18px 'Liberation Sans', sans-serif;color:#222;white-space:pre;">626</div>
<div style="position:absolute;left:545px;width:600px;text-align:right;top:618.56px;font:normal 18px/18px 'Liberation Sans', sans-serif;color:#222;white-space:pre;">411</div>
<div style="position:absolute;left:696px;width:600px;text-align:right;top:618.56px;font:normal 18px/18px 'Liberation Sans', sans-serif;color:#222;white-space:pre;">216 | 71</div>
<div style="position:absolute;left:155px;width:600px;text-align:right;top:654.06px;font:normal 18px/18px 'Liberation Sans', sans-serif;color:#222;white-space:pre;">ORF9</div>
<div style="position:absolute;left:522px;width:600px;text-align:center;top:654.06px;font:normal 18px/18px 'Liberation Sans', sans-serif;color:#222;white-space:pre;">-</div>
<div style="position:absolute;left:627.7px;width:600px;text-align:center;top:654.06px;font:normal 18px/18px 'Liberation Sans', sans-serif;color:#222;white-space:pre;">1</div>
<div style="position:absolute;left:456px;width:600px;text-align:right;top:654.06px;font:normal 18px/18px 'Liberation Sans', sans-serif;color:#222;white-space:pre;">1963</div>
<div style="position:absolute;left:545px;width:600px;text-align:right;top:654.06px;font:normal 18px/18px 'Liberation Sans', sans-serif;color:#222;white-space:pre;">1844</div>
<div style="position:absolute;left:696px;width:600px;text-align:right;top:654.06px;font:normal 18px/18px 'Liberation Sans', sans-serif;color:#222;white-space:pre;">120 | 39</div>
<div style="position:absolute;left:155px;width:600px;text-align:right;top:689.56px;font:normal 18px/18px 'Liberation Sans', sans-serif;color:#222;white-space:pre;">ORF5</div>
<div style="position:absolute;left:522px;width:600px;text-align:center;top:689.56px;font:normal 18px/18px 'Liberation Sans', sans-serif;color:#222;white-space:pre;">+</div>
<div style="position:absolute;left:627.7px;width:600px;text-align:center;top:689.56px;font:normal 18px/18px 'Liberation Sans', sans-serif;color:#222;white-space:pre;">2</div>
<div style="position:absolute;left:456px;width:600px;text-align:right;top:689.56px;font:normal 18px/18px 'Liberation Sans', sans-serif;color:#222;white-space:pre;">2147</div>
<div style="position:absolute;left:545px;width:600px;text-align:right;top:689.56px;font:normal 18px/18px 'Liberation Sans', sans-serif;color:#222;white-space:pre;">2260</div>
<div style="position:absolute;left:696px;width:600px;text-align:right;top:689.56px;font:normal 18px/18px 'Liberation Sans', sans-serif;color:#222;white-space:pre;">114 | 37</div>
<div style="position:absolute;left:155px;width:600px;text-align:right;top:725.06px;font:normal 18px/18px 'Liberation Sans', sans-serif;color:#222;white-space:pre;">ORF10</div>
<div style="position:absolute;left:522px;width:600px;text-align:center;top:725.06px;font:normal 18px/18px 'Liberation Sans', sans-serif;color:#222;white-space:pre;">-</div>
<div style="position:absolute;left:627.7px;width:600px;text-align:center;top:725.06px;font:normal 18px/18px 'Liberation Sans', sans-serif;color:#222;white-space:pre;">1</div>
<div style="position:absolute;left:456px;width:600px;text-align:right;top:725.06px;font:normal 18px/18px 'Liberation Sans', sans-serif;color:#222;white-space:pre;">1582</div>
<div style="position:absolute;left:545px;width:600px;text-align:right;top:725.06px;font:normal 18px/18px 'Liberation Sans', sans-serif;color:#222;white-space:pre;">1469</div>
<div style="position:absolute;left:696px;width:600px;text-align:right;top:725.06px;font:normal 18px/18px 'Liberation Sans', sans-serif;color:#222;white-space:pre;">114 | 37</div>
<div style="position:absolute;left:155px;width:600px;text-align:right;top:760.56px;font:normal 18px/18px 'Liberation Sans', sans-serif;color:#222;white-space:pre;">ORF4</div>
<div style="position:absolute;left:522px;width:600px;text-align:center;top:760.56px;font:normal 18px/18px 'Liberation Sans', sans-serif;color:#222;white-space:pre;">+</div>
<div style="position:absolute;left:627.7px;width:600px;text-align:center;top:760.56px;font:normal 18px/18px 'Liberation Sans', sans-serif;color:#222;white-space:pre;">2</div>
<div style="position:absolute;left:456px;width:600px;text-align:right;top:760.56px;font:normal 18px/18px 'Liberation Sans', sans-serif;color:#222;white-space:pre;">785</div>
<div style="position:absolute;left:545px;width:600px;text-align:right;top:760.56px;font:normal 18px/18px 'Liberation Sans', sans-serif;color:#222;white-space:pre;">892</div>
<div style="position:absolute;left:696px;width:600px;text-align:right;top:760.56px;font:normal 18px/18px 'Liberation Sans', sans-serif;color:#222;white-space:pre;">108 | 35</div>
<div style="position:absolute;left:155px;width:600px;text-align:right;top:796.06px;font:normal 18px/18px 'Liberation Sans', sans-serif;color:#222;white-space:pre;">ORF12</div>
<div style="position:absolute;left:522px;width:600px;text-align:center;top:796.06px;font:normal 18px/18px 'Liberation Sans', sans-serif;color:#222;white-space:pre;">-</div>
<div style="position:absolute;left:627.7px;width:600px;text-align:center;top:796.06px;font:normal 18px/18px 'Liberation Sans', sans-serif;color:#222;white-space:pre;">3</div>
<div style="position:absolute;left:456px;width:600px;text-align:right;top:796.06px;font:normal 18px/18px 'Liberation Sans', sans-serif;color:#222;white-space:pre;">1058</div>
<div style="position:absolute;left:545px;width:600px;text-align:right;top:796.06px;font:normal 18px/18px 'Liberation Sans', sans-serif;color:#222;white-space:pre;">954</div>
<div style="position:absolute;left:696px;width:600px;text-align:right;top:796.06px;font:normal 18px/18px 'Liberation Sans', sans-serif;color:#222;white-space:pre;">105 | 34</div>
<div style="position:absolute;left:155px;width:600px;text-align:right;top:831.56px;font:normal 18px/18px 'Liberation Sans', sans-serif;color:#222;white-space:pre;">ORF6</div>
<div style="position:absolute;left:522px;width:600px;text-align:center;top:831.56px;font:normal 18px/18px 'Liberation Sans', sans-serif;color:#222;white-space:pre;">+</div>
<div style="position:absolute;left:627.7px;width:600px;text-align:center;top:831.56px;font:normal 18px/18px 'Liberation Sans', sans-serif;color:#222;white-space:pre;">3</div>
<div style="position:absolute;left:456px;width:600px;text-align:right;top:831.56px;font:normal 18px/18px 'Liberation Sans', sans-serif;color:#222;white-space:pre;">1557</div>
<div style="position:absolute;left:545px;width:600px;text-align:right;top:831.56px;font:normal 18px/18px 'Liberation Sans', sans-serif;color:#222;white-space:pre;">1649</div>
<div style="position:absolute;left:696px;width:600px;text-align:right;top:831.56px;font:normal 18px/18px 'Liberation Sans', sans-serif;color:#222;white-space:pre;">93 | 30</div>
<div style="position:absolute;left:155px;width:600px;text-align:right;top:867.06px;font:normal 18px/18px 'Liberation Sans', sans-serif;color:#222;white-space:pre;">ORF11</div>
<div style="position:absolute;left:522px;width:600px;text-align:center;top:867.06px;font:normal 18px/18px 'Liberation Sans', sans-serif;color:#222;white-space:pre;">-</div>
<div style="position:absolute;left:627.7px;width:600px;text-align:center;top:867.06px;font:normal 18px/18px 'Liberation Sans', sans-serif;color:#222;white-space:pre;">1</div>
<div style="position:absolute;left:456px;width:600px;text-align:right;top:867.06px;font:normal 18px/18px 'Liberation Sans', sans-serif;color:#222;white-space:pre;">424</div>
<div style="position:absolute;left:545px;width:600px;text-align:right;top:867.06px;font:normal 18px/18px 'Liberation Sans', sans-serif;color:#222;white-space:pre;">335</div>
<div style="position:absolute;left:696px;width:600px;text-align:right;top:867.06px;font:normal 18px/18px 'Liberation Sans', sans-serif;color:#222;white-space:pre;">90 | 29</div>
<div style="position:absolute;left:671px;top:874px;width:665px;height:6px;background:#fcfcfc;"></div>
<div style="position:absolute;left:671px;top:873px;width:665px;height:2.2px;background:#a9bdd6;"></div>
</body></html>
